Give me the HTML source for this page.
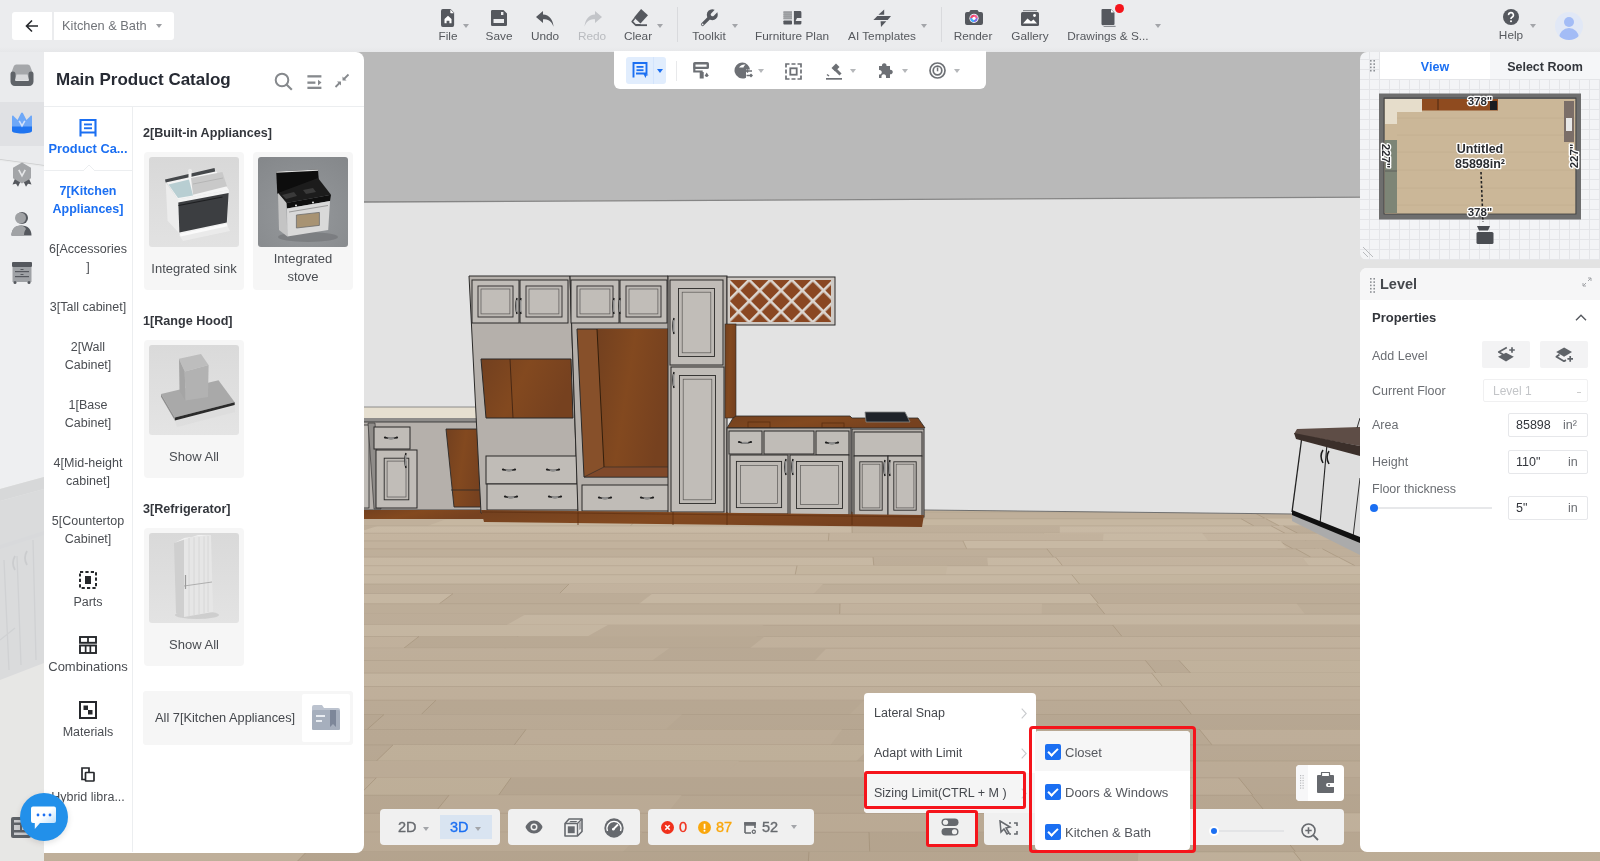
<!DOCTYPE html>
<html><head><meta charset="utf-8">
<style>
*{margin:0;padding:0;box-sizing:border-box}
html,body{width:1600px;height:861px;overflow:hidden;font-family:"Liberation Sans",sans-serif;background:#ebecee;position:relative}
.a{position:absolute}
#scene{position:absolute;left:0;top:52px;width:1600px;height:809px;overflow:hidden}
#topbar{position:absolute;left:0;top:0;width:1600px;height:52px;background:linear-gradient(#ebecee 47px,#e6e7e9 52px)}
.tb{position:absolute;top:0;height:52px;color:#55585d;font-size:11.8px}
.tb svg{position:absolute;top:8px}
.tl{position:absolute;top:29px;white-space:nowrap;transform:translateX(-50%)}
.car{position:absolute;width:0;height:0;border-left:3.5px solid transparent;border-right:3.5px solid transparent;border-top:4px solid #a3a5a9}
#rail{position:absolute;left:0;top:52px;width:44px;height:809px;background:rgba(236,237,239,0.72)}
#cat{position:absolute;left:44px;top:52px;width:320px;height:801px;background:#fff;border-radius:0 8px 8px 0;overflow:hidden}
.cc{position:absolute;left:0;width:88px;text-align:center;font-size:12.5px;line-height:18px;color:#4a4d52;white-space:nowrap}
.sh{position:absolute;left:99px;font-size:12.6px;font-weight:700;color:#33363c;white-space:nowrap}
.card{position:absolute;width:100px;background:#f6f6f6;border-radius:4px}
.card .img{position:absolute;left:5px;top:5px;width:90px;height:90px;border-radius:3px;overflow:hidden}
.card .lbl{position:absolute;left:0;width:100px;text-align:center;font-size:13px;color:#4a4d52;line-height:18px}
.lp{position:absolute;left:12px;font-size:12.5px;color:#6b6e73;white-space:nowrap}
.inp{position:absolute;left:148px;width:80px;height:24px;border:1px solid #e6e7ea;border-radius:2px;background:#fff}
.bx{position:absolute;top:809px;height:36px;background:#f0f0f0;border-radius:4px}
.mi{position:absolute;left:10px;font-size:12.5px;color:#45484d;white-space:nowrap}
.ck{position:absolute;left:10px;width:16px;height:16px;border-radius:2px;background:#1b6ff2}
.ck::after{content:"";position:absolute;left:5px;top:2px;width:4px;height:8px;border:solid #fff;border-width:0 2px 2px 0;transform:rotate(45deg)}
</style></head><body>
<div id="scene"><svg width="1600" height="809" viewBox="0 52 1600 809" style="display:block;position:absolute;left:0;top:0">
<defs>
<pattern id="lat" width="15" height="15" patternUnits="userSpaceOnUse" patternTransform="translate(728,278) rotate(45)"><rect width="15" height="15" fill="#8a4722"/><rect width="15" height="2.6" fill="#dcd6d0"/><rect width="2.6" height="15" fill="#dcd6d0"/></pattern>
</defs>
<defs><linearGradient id="flg" x1="0" y1="0" x2="0" y2="1"><stop offset="0" stop-color="#000" stop-opacity="0"/><stop offset="1" stop-color="#3a2000" stop-opacity="0.07"/></linearGradient></defs>
<rect x="0" y="52" width="1600" height="809" fill="#c3b39e"/>
<rect x="0" y="512.0" width="1600" height="7.1" fill="#bfaf9a"/>
<line x1="0" y1="512.0" x2="1600" y2="512.0" stroke="#ab9b85" stroke-width="0.7" opacity="0.6"/>
<polygon points="1690.0,512.0 1806.4,512.0 1833.3,519.1 1716.9,519.1" fill="#c9baa5"/>
<line x1="1690.0" y1="512.0" x2="1716.9" y2="518.8" stroke="#a8977f" stroke-width="0.8" opacity="0.85"/>
<polygon points="1809.0,512.0 2001.0,512.0 2031.8,519.1 1839.8,519.1" fill="#c9baa5"/>
<line x1="1809.0" y1="512.0" x2="1839.8" y2="518.8" stroke="#a8977f" stroke-width="0.8" opacity="0.85"/>
<polygon points="165.0,512.0 380.4,512.0 358.4,519.1 143.0,519.1" fill="#c6b7a1"/>
<line x1="165.0" y1="512.0" x2="143.0" y2="518.8" stroke="#a8977f" stroke-width="0.8" opacity="0.85"/>
<polygon points="-22.0,512.0 104.0,512.0 76.0,519.1 -50.0,519.1" fill="#bfaf9a"/>
<line x1="-22.0" y1="512.0" x2="-50.0" y2="518.8" stroke="#a8977f" stroke-width="0.8" opacity="0.85"/>
<polygon points="1610.0,512.0 1775.6,512.0 1800.0,519.1 1634.4,519.1" fill="#c0b09b"/>
<line x1="1610.0" y1="512.0" x2="1634.4" y2="518.8" stroke="#a8977f" stroke-width="0.8" opacity="0.85"/>
<polygon points="-430.0,512.0 -309.4,512.0 -350.5,519.1 -471.1,519.1" fill="#c5b5a0"/>
<line x1="-430.0" y1="512.0" x2="-471.1" y2="518.8" stroke="#a8977f" stroke-width="0.8" opacity="0.85"/>
<polygon points="1833.0,512.0 1941.0,512.0 1972.5,519.1 1864.5,519.1" fill="#c6b7a1"/>
<line x1="1833.0" y1="512.0" x2="1864.5" y2="518.8" stroke="#a8977f" stroke-width="0.8" opacity="0.85"/>
<polygon points="1253.0,512.0 1492.4,512.0 1505.3,519.1 1265.9,519.1" fill="#bdad98"/>
<line x1="1253.0" y1="512.0" x2="1265.9" y2="518.8" stroke="#a8977f" stroke-width="0.8" opacity="0.85"/>
<polygon points="1922.0,512.0 2069.6,512.0 2104.0,519.1 1956.4,519.1" fill="#c0b09b"/>
<line x1="1922.0" y1="512.0" x2="1956.4" y2="518.8" stroke="#a8977f" stroke-width="0.8" opacity="0.85"/>
<polygon points="41.0,512.0 287.0,512.0 261.1,519.1 15.1,519.1" fill="#bdad98"/>
<line x1="41.0" y1="512.0" x2="15.1" y2="518.8" stroke="#a8977f" stroke-width="0.8" opacity="0.85"/>
<polygon points="-534.0,512.0 -403.8,512.0 -448.2,519.1 -578.4,519.1" fill="#c0b09b"/>
<line x1="-534.0" y1="512.0" x2="-578.4" y2="518.8" stroke="#a8977f" stroke-width="0.8" opacity="0.85"/>
<polygon points="552.0,512.0 759.6,512.0 750.0,519.1 542.4,519.1" fill="#bdad98"/>
<line x1="552.0" y1="512.0" x2="542.4" y2="518.8" stroke="#a8977f" stroke-width="0.8" opacity="0.85"/>
<rect x="0" y="518.8" width="1600" height="7.4" fill="#c6b7a1"/>
<line x1="0" y1="518.8" x2="1600" y2="518.8" stroke="#ab9b85" stroke-width="0.7" opacity="0.6"/>
<polygon points="1262.9,518.8 1367.5,518.8 1380.9,526.2 1276.2,526.2" fill="#c6b7a1"/>
<line x1="1262.9" y1="518.8" x2="1276.2" y2="525.9" stroke="#a8977f" stroke-width="0.8" opacity="0.85"/>
<polygon points="1723.0,518.8 1896.4,518.8 1924.6,526.2 1751.2,526.2" fill="#c3b39e"/>
<line x1="1723.0" y1="518.8" x2="1751.2" y2="525.9" stroke="#a8977f" stroke-width="0.8" opacity="0.85"/>
<polygon points="1316.7,518.8 1533.4,518.8 1548.5,526.2 1331.7,526.2" fill="#c0b09b"/>
<line x1="1316.7" y1="518.8" x2="1331.7" y2="525.9" stroke="#a8977f" stroke-width="0.8" opacity="0.85"/>
<polygon points="1263.8,518.8 1489.9,518.8 1503.2,526.2 1277.2,526.2" fill="#c9baa5"/>
<line x1="1263.8" y1="518.8" x2="1277.2" y2="525.9" stroke="#a8977f" stroke-width="0.8" opacity="0.85"/>
<polygon points="130.7,518.8 379.1,518.8 355.8,526.2 107.5,526.2" fill="#bfaf9a"/>
<line x1="130.7" y1="518.8" x2="107.5" y2="525.9" stroke="#a8977f" stroke-width="0.8" opacity="0.85"/>
<polygon points="1515.7,518.8 1773.3,518.8 1794.8,526.2 1537.2,526.2" fill="#c9baa5"/>
<line x1="1515.7" y1="518.8" x2="1537.2" y2="525.9" stroke="#a8977f" stroke-width="0.8" opacity="0.85"/>
<polygon points="1368.0,518.8 1482.5,518.8 1499.3,526.2 1384.7,526.2" fill="#c0b09b"/>
<line x1="1368.0" y1="518.8" x2="1384.7" y2="525.9" stroke="#a8977f" stroke-width="0.8" opacity="0.85"/>
<polygon points="2014.2,518.8 2178.9,518.8 2216.6,526.2 2051.8,526.2" fill="#c0b09b"/>
<line x1="2014.2" y1="518.8" x2="2051.8" y2="525.9" stroke="#a8977f" stroke-width="0.8" opacity="0.85"/>
<polygon points="1944.1,518.8 2059.9,518.8 2095.3,526.2 1979.5,526.2" fill="#bdad98"/>
<line x1="1944.1" y1="518.8" x2="1979.5" y2="525.9" stroke="#a8977f" stroke-width="0.8" opacity="0.85"/>
<polygon points="143.9,518.8 303.7,518.8 280.9,526.2 121.1,526.2" fill="#c9baa5"/>
<line x1="143.9" y1="518.8" x2="121.1" y2="525.9" stroke="#a8977f" stroke-width="0.8" opacity="0.85"/>
<polygon points="1241.2,518.8 1339.0,518.8 1351.6,526.2 1253.8,526.2" fill="#c0b09b"/>
<line x1="1241.2" y1="518.8" x2="1253.8" y2="525.9" stroke="#a8977f" stroke-width="0.8" opacity="0.85"/>
<polygon points="637.3,518.8 815.1,518.8 808.2,526.2 630.5,526.2" fill="#c6b7a1"/>
<line x1="637.3" y1="518.8" x2="630.5" y2="525.9" stroke="#a8977f" stroke-width="0.8" opacity="0.85"/>
<polygon points="-43.9,518.8 190.2,518.8 161.3,526.2 -72.8,526.2" fill="#bdad98"/>
<line x1="-43.9" y1="518.8" x2="-72.8" y2="525.9" stroke="#a8977f" stroke-width="0.8" opacity="0.85"/>
<polygon points="-473.0,518.8 -361.6,518.8 -404.3,526.2 -515.8,526.2" fill="#c0b09b"/>
<line x1="-473.0" y1="518.8" x2="-515.8" y2="525.9" stroke="#a8977f" stroke-width="0.8" opacity="0.85"/>
<polygon points="1867.7,518.8 2016.3,518.8 2049.2,526.2 1900.6,526.2" fill="#c6b7a1"/>
<line x1="1867.7" y1="518.8" x2="1900.6" y2="525.9" stroke="#a8977f" stroke-width="0.8" opacity="0.85"/>
<polygon points="1266.0,518.8 1475.3,518.8 1488.7,526.2 1279.4,526.2" fill="#c9baa5"/>
<line x1="1266.0" y1="518.8" x2="1279.4" y2="525.9" stroke="#a8977f" stroke-width="0.8" opacity="0.85"/>
<polygon points="2122.4,518.8 2256.8,518.8 2297.9,526.2 2163.5,526.2" fill="#c3b39e"/>
<line x1="2122.4" y1="518.8" x2="2163.5" y2="525.9" stroke="#a8977f" stroke-width="0.8" opacity="0.85"/>
<polygon points="2101.9,518.8 2309.3,518.8 2349.8,526.2 2142.3,526.2" fill="#c6b7a1"/>
<line x1="2101.9" y1="518.8" x2="2142.3" y2="525.9" stroke="#a8977f" stroke-width="0.8" opacity="0.85"/>
<polygon points="212.0,518.8 447.3,518.8 426.7,526.2 191.4,526.2" fill="#c0b09b"/>
<line x1="212.0" y1="518.8" x2="191.4" y2="525.9" stroke="#a8977f" stroke-width="0.8" opacity="0.85"/>
<rect x="0" y="525.9" width="1600" height="7.7" fill="#c9baa5"/>
<line x1="0" y1="525.9" x2="1600" y2="525.9" stroke="#ab9b85" stroke-width="0.7" opacity="0.6"/>
<polygon points="1271.2,525.9 1475.1,525.9 1488.8,533.5 1284.9,533.5" fill="#c5b5a0"/>
<line x1="1271.2" y1="525.9" x2="1284.9" y2="533.2" stroke="#a8977f" stroke-width="0.8" opacity="0.85"/>
<polygon points="132.0,525.9 377.4,525.9 354.1,533.5 108.6,533.5" fill="#bdad98"/>
<line x1="132.0" y1="525.9" x2="108.6" y2="533.2" stroke="#a8977f" stroke-width="0.8" opacity="0.85"/>
<polygon points="1543.3,525.9 1790.0,525.9 1812.6,533.5 1565.8,533.5" fill="#bdad98"/>
<line x1="1543.3" y1="525.9" x2="1565.8" y2="533.2" stroke="#a8977f" stroke-width="0.8" opacity="0.85"/>
<polygon points="1376.6,525.9 1499.3,525.9 1516.5,533.5 1393.7,533.5" fill="#bfaf9a"/>
<line x1="1376.6" y1="525.9" x2="1393.7" y2="533.2" stroke="#a8977f" stroke-width="0.8" opacity="0.85"/>
<polygon points="1979.6,525.9 2243.6,525.9 2280.4,533.5 2016.4,533.5" fill="#c3b39e"/>
<line x1="1979.6" y1="525.9" x2="2016.4" y2="533.2" stroke="#a8977f" stroke-width="0.8" opacity="0.85"/>
<polygon points="120.0,525.9 316.9,525.9 293.1,533.5 96.2,533.5" fill="#c6b7a1"/>
<line x1="120.0" y1="525.9" x2="96.2" y2="533.2" stroke="#a8977f" stroke-width="0.8" opacity="0.85"/>
<polygon points="-289.7,525.9 -165.7,525.9 -202.8,533.5 -326.8,533.5" fill="#c3b39e"/>
<line x1="-289.7" y1="525.9" x2="-326.8" y2="533.2" stroke="#a8977f" stroke-width="0.8" opacity="0.85"/>
<polygon points="2078.1,525.9 2181.0,525.9 2221.0,533.5 2118.1,533.5" fill="#bdad98"/>
<line x1="2078.1" y1="525.9" x2="2118.1" y2="533.2" stroke="#a8977f" stroke-width="0.8" opacity="0.85"/>
<polygon points="1903.6,525.9 2036.0,525.9 2070.3,533.5 1938.0,533.5" fill="#c0b09b"/>
<line x1="1903.6" y1="525.9" x2="1938.0" y2="533.2" stroke="#a8977f" stroke-width="0.8" opacity="0.85"/>
<polygon points="1283.5,525.9 1537.9,525.9 1552.0,533.5 1297.6,533.5" fill="#bdad98"/>
<line x1="1283.5" y1="525.9" x2="1297.6" y2="533.2" stroke="#a8977f" stroke-width="0.8" opacity="0.85"/>
<polygon points="2145.3,525.9 2244.4,525.9 2286.6,533.5 2187.5,533.5" fill="#c9baa5"/>
<line x1="2145.3" y1="525.9" x2="2187.5" y2="533.2" stroke="#a8977f" stroke-width="0.8" opacity="0.85"/>
<polygon points="-11.7,525.9 182.7,525.9 154.6,533.5 -39.7,533.5" fill="#c9baa5"/>
<line x1="-11.7" y1="525.9" x2="-39.7" y2="533.2" stroke="#a8977f" stroke-width="0.8" opacity="0.85"/>
<polygon points="2029.1,525.9 2190.8,525.9 2229.2,533.5 2067.5,533.5" fill="#c0b09b"/>
<line x1="2029.1" y1="525.9" x2="2067.5" y2="533.2" stroke="#a8977f" stroke-width="0.8" opacity="0.85"/>
<polygon points="-630.9,525.9 -480.0,525.9 -528.2,533.5 -679.1,533.5" fill="#c3b39e"/>
<line x1="-630.9" y1="525.9" x2="-679.1" y2="533.2" stroke="#a8977f" stroke-width="0.8" opacity="0.85"/>
<polygon points="852.0,525.9 1059.8,525.9 1059.8,533.5 852.1,533.5" fill="#bfaf9a"/>
<line x1="852.0" y1="525.9" x2="852.1" y2="533.2" stroke="#a8977f" stroke-width="0.8" opacity="0.85"/>
<rect x="0" y="533.2" width="1600" height="7.9" fill="#c5b5a0"/>
<line x1="0" y1="533.2" x2="1600" y2="533.2" stroke="#ab9b85" stroke-width="0.7" opacity="0.6"/>
<polygon points="1353.8,533.2 1516.8,533.2 1533.3,541.2 1370.3,541.2" fill="#bdad98"/>
<line x1="1353.8" y1="533.2" x2="1370.3" y2="540.9" stroke="#a8977f" stroke-width="0.8" opacity="0.85"/>
<polygon points="1544.1,533.2 1732.9,533.2 1755.6,541.2 1566.8,541.2" fill="#c6b7a1"/>
<line x1="1544.1" y1="533.2" x2="1566.8" y2="540.9" stroke="#a8977f" stroke-width="0.8" opacity="0.85"/>
<polygon points="84.5,533.2 231.0,533.2 205.9,541.2 59.4,541.2" fill="#c0b09b"/>
<line x1="84.5" y1="533.2" x2="59.4" y2="540.9" stroke="#a8977f" stroke-width="0.8" opacity="0.85"/>
<polygon points="1564.7,533.2 1679.5,533.2 1703.0,541.2 1588.1,541.2" fill="#bfaf9a"/>
<line x1="1564.7" y1="533.2" x2="1588.1" y2="540.9" stroke="#a8977f" stroke-width="0.8" opacity="0.85"/>
<polygon points="2089.0,533.2 2227.0,533.2 2267.6,541.2 2129.7,541.2" fill="#c5b5a0"/>
<line x1="2089.0" y1="533.2" x2="2129.7" y2="540.9" stroke="#a8977f" stroke-width="0.8" opacity="0.85"/>
<polygon points="-110.1,533.2 25.2,533.2 -6.3,541.2 -141.6,541.2" fill="#bdad98"/>
<line x1="-110.1" y1="533.2" x2="-141.6" y2="540.9" stroke="#a8977f" stroke-width="0.8" opacity="0.85"/>
<polygon points="-335.0,533.2 -111.9,533.2 -150.8,541.2 -373.9,541.2" fill="#c5b5a0"/>
<line x1="-335.0" y1="533.2" x2="-373.9" y2="540.9" stroke="#a8977f" stroke-width="0.8" opacity="0.85"/>
<polygon points="1679.7,533.2 1845.4,533.2 1872.6,541.2 1706.9,541.2" fill="#c6b7a1"/>
<line x1="1679.7" y1="533.2" x2="1706.9" y2="540.9" stroke="#a8977f" stroke-width="0.8" opacity="0.85"/>
<polygon points="-554.1,533.2 -294.7,533.2 -340.7,541.2 -600.1,541.2" fill="#c0b09b"/>
<line x1="-554.1" y1="533.2" x2="-600.1" y2="540.9" stroke="#a8977f" stroke-width="0.8" opacity="0.85"/>
<polygon points="1043.2,533.2 1202.3,533.2 1208.6,541.2 1049.6,541.2" fill="#c9baa5"/>
<line x1="1043.2" y1="533.2" x2="1049.6" y2="540.9" stroke="#a8977f" stroke-width="0.8" opacity="0.85"/>
<polygon points="2196.0,533.2 2298.3,533.2 2342.4,541.2 2240.1,541.2" fill="#c5b5a0"/>
<line x1="2196.0" y1="533.2" x2="2240.1" y2="540.9" stroke="#a8977f" stroke-width="0.8" opacity="0.85"/>
<polygon points="2032.2,533.2 2290.3,533.2 2329.1,541.2 2071.0,541.2" fill="#bfaf9a"/>
<line x1="2032.2" y1="533.2" x2="2071.0" y2="540.9" stroke="#a8977f" stroke-width="0.8" opacity="0.85"/>
<polygon points="2182.4,533.2 2293.2,533.2 2336.9,541.2 2226.1,541.2" fill="#c3b39e"/>
<line x1="2182.4" y1="533.2" x2="2226.1" y2="540.9" stroke="#a8977f" stroke-width="0.8" opacity="0.85"/>
<polygon points="2066.3,533.2 2241.3,533.2 2281.2,541.2 2106.2,541.2" fill="#c0b09b"/>
<line x1="2066.3" y1="533.2" x2="2106.2" y2="540.9" stroke="#a8977f" stroke-width="0.8" opacity="0.85"/>
<polygon points="-681.1,533.2 -465.2,533.2 -515.4,541.2 -731.3,541.2" fill="#c9baa5"/>
<line x1="-681.1" y1="533.2" x2="-731.3" y2="540.9" stroke="#a8977f" stroke-width="0.8" opacity="0.85"/>
<polygon points="829.0,533.2 1103.6,533.2 1102.9,541.2 828.3,541.2" fill="#c3b39e"/>
<line x1="829.0" y1="533.2" x2="828.3" y2="540.9" stroke="#a8977f" stroke-width="0.8" opacity="0.85"/>
<rect x="0" y="540.9" width="1600" height="8.3" fill="#c3b39e"/>
<line x1="0" y1="540.9" x2="1600" y2="540.9" stroke="#ab9b85" stroke-width="0.7" opacity="0.6"/>
<polygon points="1367.2,540.9 1649.5,540.9 1666.6,549.1 1384.3,549.1" fill="#c0b09b"/>
<line x1="1367.2" y1="540.9" x2="1384.3" y2="548.8" stroke="#a8977f" stroke-width="0.8" opacity="0.85"/>
<polygon points="1305.5,540.9 1588.4,540.9 1603.4,549.1 1320.5,549.1" fill="#c5b5a0"/>
<line x1="1305.5" y1="540.9" x2="1320.5" y2="548.8" stroke="#a8977f" stroke-width="0.8" opacity="0.85"/>
<polygon points="1567.8,540.9 1823.5,540.9 1847.2,549.1 1591.5,549.1" fill="#bfaf9a"/>
<line x1="1567.8" y1="540.9" x2="1591.5" y2="548.8" stroke="#a8977f" stroke-width="0.8" opacity="0.85"/>
<polygon points="1930.1,540.9 2062.3,540.9 2098.0,549.1 1965.7,549.1" fill="#bdad98"/>
<line x1="1930.1" y1="540.9" x2="1965.7" y2="548.8" stroke="#a8977f" stroke-width="0.8" opacity="0.85"/>
<polygon points="89.3,540.9 268.6,540.9 243.5,549.1 64.2,549.1" fill="#bfaf9a"/>
<line x1="89.3" y1="540.9" x2="64.2" y2="548.8" stroke="#a8977f" stroke-width="0.8" opacity="0.85"/>
<polygon points="2132.8,540.9 2418.4,540.9 2460.8,549.1 2175.1,549.1" fill="#bdad98"/>
<line x1="2132.8" y1="540.9" x2="2175.1" y2="548.8" stroke="#a8977f" stroke-width="0.8" opacity="0.85"/>
<polygon points="73.3,540.9 276.4,540.9 250.8,549.1 47.6,549.1" fill="#c3b39e"/>
<line x1="73.3" y1="540.9" x2="47.6" y2="548.8" stroke="#a8977f" stroke-width="0.8" opacity="0.85"/>
<polygon points="1278.6,540.9 1438.1,540.9 1452.3,549.1 1292.8,549.1" fill="#bfaf9a"/>
<line x1="1278.6" y1="540.9" x2="1292.8" y2="548.8" stroke="#a8977f" stroke-width="0.8" opacity="0.85"/>
<polygon points="-608.2,540.9 -326.7,540.9 -374.8,549.1 -656.4,549.1" fill="#c3b39e"/>
<line x1="-608.2" y1="540.9" x2="-656.4" y2="548.8" stroke="#a8977f" stroke-width="0.8" opacity="0.85"/>
<polygon points="1968.6,540.9 2160.1,540.9 2197.1,549.1 2005.5,549.1" fill="#bfaf9a"/>
<line x1="1968.6" y1="540.9" x2="2005.5" y2="548.8" stroke="#a8977f" stroke-width="0.8" opacity="0.85"/>
<polygon points="1045.4,540.9 1280.6,540.9 1287.1,549.1 1051.9,549.1" fill="#c9baa5"/>
<line x1="1045.4" y1="540.9" x2="1051.9" y2="548.8" stroke="#a8977f" stroke-width="0.8" opacity="0.85"/>
<polygon points="2223.1,540.9 2397.6,540.9 2443.0,549.1 2268.4,549.1" fill="#bfaf9a"/>
<line x1="2223.1" y1="540.9" x2="2268.4" y2="548.8" stroke="#a8977f" stroke-width="0.8" opacity="0.85"/>
<polygon points="2105.1,540.9 2256.4,540.9 2297.9,549.1 2146.6,549.1" fill="#c9baa5"/>
<line x1="2105.1" y1="540.9" x2="2146.6" y2="548.8" stroke="#a8977f" stroke-width="0.8" opacity="0.85"/>
<polygon points="-731.2,540.9 -446.2,540.9 -498.5,549.1 -783.4,549.1" fill="#c3b39e"/>
<line x1="-731.2" y1="540.9" x2="-783.4" y2="548.8" stroke="#a8977f" stroke-width="0.8" opacity="0.85"/>
<polygon points="963.0,540.9 1238.4,540.9 1242.1,549.1 966.7,549.1" fill="#c9baa5"/>
<line x1="963.0" y1="540.9" x2="966.7" y2="548.8" stroke="#a8977f" stroke-width="0.8" opacity="0.85"/>
<rect x="0" y="548.8" width="1600" height="8.6" fill="#c0b09b"/>
<line x1="0" y1="548.8" x2="1600" y2="548.8" stroke="#ab9b85" stroke-width="0.7" opacity="0.6"/>
<polygon points="1317.8,548.8 1580.5,548.8 1596.1,557.4 1333.4,557.4" fill="#c0b09b"/>
<line x1="1317.8" y1="548.8" x2="1333.4" y2="557.1" stroke="#a8977f" stroke-width="0.8" opacity="0.85"/>
<polygon points="1314.5,548.8 1555.3,548.8 1570.8,557.4 1329.9,557.4" fill="#c6b7a1"/>
<line x1="1314.5" y1="548.8" x2="1329.9" y2="557.1" stroke="#a8977f" stroke-width="0.8" opacity="0.85"/>
<polygon points="1974.9,548.8 2229.1,548.8 2266.5,557.4 2012.3,557.4" fill="#c5b5a0"/>
<line x1="1974.9" y1="548.8" x2="2012.3" y2="557.1" stroke="#a8977f" stroke-width="0.8" opacity="0.85"/>
<polygon points="56.1,548.8 218.8,548.8 192.4,557.4 29.7,557.4" fill="#bfaf9a"/>
<line x1="56.1" y1="548.8" x2="29.7" y2="557.1" stroke="#a8977f" stroke-width="0.8" opacity="0.85"/>
<polygon points="1611.2,548.8 1790.1,548.8 1815.4,557.4 1636.5,557.4" fill="#c3b39e"/>
<line x1="1611.2" y1="548.8" x2="1636.5" y2="557.1" stroke="#a8977f" stroke-width="0.8" opacity="0.85"/>
<polygon points="40.5,548.8 224.3,548.8 197.4,557.4 13.6,557.4" fill="#bfaf9a"/>
<line x1="40.5" y1="548.8" x2="13.6" y2="557.1" stroke="#a8977f" stroke-width="0.8" opacity="0.85"/>
<polygon points="1295.8,548.8 1478.9,548.8 1493.8,557.4 1310.7,557.4" fill="#c3b39e"/>
<line x1="1295.8" y1="548.8" x2="1310.7" y2="557.1" stroke="#a8977f" stroke-width="0.8" opacity="0.85"/>
<polygon points="2198.4,548.8 2352.7,548.8 2397.5,557.4 2243.3,557.4" fill="#bfaf9a"/>
<line x1="2198.4" y1="548.8" x2="2243.3" y2="557.1" stroke="#a8977f" stroke-width="0.8" opacity="0.85"/>
<polygon points="1046.9,548.8 1277.2,548.8 1283.7,557.4 1053.4,557.4" fill="#c0b09b"/>
<line x1="1046.9" y1="548.8" x2="1053.4" y2="557.1" stroke="#a8977f" stroke-width="0.8" opacity="0.85"/>
<polygon points="1322.4,548.8 1541.4,548.8 1557.1,557.4 1338.1,557.4" fill="#c0b09b"/>
<line x1="1322.4" y1="548.8" x2="1338.1" y2="557.1" stroke="#a8977f" stroke-width="0.8" opacity="0.85"/>
<polygon points="2296.3,548.8 2515.4,548.8 2563.4,557.4 2344.4,557.4" fill="#c3b39e"/>
<line x1="2296.3" y1="548.8" x2="2344.4" y2="557.1" stroke="#a8977f" stroke-width="0.8" opacity="0.85"/>
<polygon points="2107.1,548.8 2290.9,548.8 2332.7,557.4 2148.9,557.4" fill="#c0b09b"/>
<line x1="2107.1" y1="548.8" x2="2148.9" y2="557.1" stroke="#a8977f" stroke-width="0.8" opacity="0.85"/>
<polygon points="2274.6,548.8 2449.9,548.8 2497.3,557.4 2321.9,557.4" fill="#bfaf9a"/>
<line x1="2274.6" y1="548.8" x2="2321.9" y2="557.1" stroke="#a8977f" stroke-width="0.8" opacity="0.85"/>
<polygon points="-90.9,548.8 62.7,548.8 31.4,557.4 -122.1,557.4" fill="#c6b7a1"/>
<line x1="-90.9" y1="548.8" x2="-122.1" y2="557.1" stroke="#a8977f" stroke-width="0.8" opacity="0.85"/>
<polygon points="2146.5,548.8 2299.3,548.8 2342.4,557.4 2189.6,557.4" fill="#c0b09b"/>
<line x1="2146.5" y1="548.8" x2="2189.6" y2="557.1" stroke="#a8977f" stroke-width="0.8" opacity="0.85"/>
<polygon points="1469.0,548.8 1606.3,548.8 1626.9,557.4 1489.6,557.4" fill="#c5b5a0"/>
<line x1="1469.0" y1="548.8" x2="1489.6" y2="557.1" stroke="#a8977f" stroke-width="0.8" opacity="0.85"/>
<rect x="0" y="557.1" width="1600" height="8.9" fill="#c9baa5"/>
<line x1="0" y1="557.1" x2="1600" y2="557.1" stroke="#ab9b85" stroke-width="0.7" opacity="0.6"/>
<polygon points="1338.5,557.1 1579.4,557.1 1595.7,566.0 1354.9,566.0" fill="#c3b39e"/>
<line x1="1338.5" y1="557.1" x2="1354.9" y2="565.7" stroke="#a8977f" stroke-width="0.8" opacity="0.85"/>
<polygon points="1615.0,557.1 1802.0,557.1 1827.6,566.0 1640.6,566.0" fill="#bdad98"/>
<line x1="1615.0" y1="557.1" x2="1640.6" y2="565.7" stroke="#a8977f" stroke-width="0.8" opacity="0.85"/>
<polygon points="12.3,557.1 260.5,557.1 232.4,566.0 -15.7,566.0" fill="#c3b39e"/>
<line x1="12.3" y1="557.1" x2="-15.7" y2="565.7" stroke="#a8977f" stroke-width="0.8" opacity="0.85"/>
<polygon points="2143.4,557.1 2267.1,557.1 2310.4,566.0 2186.7,566.0" fill="#c6b7a1"/>
<line x1="2143.4" y1="557.1" x2="2186.7" y2="565.7" stroke="#a8977f" stroke-width="0.8" opacity="0.85"/>
<polygon points="-436.6,557.1 -253.2,557.1 -296.3,566.0 -479.6,566.0" fill="#bfaf9a"/>
<line x1="-436.6" y1="557.1" x2="-479.6" y2="565.7" stroke="#a8977f" stroke-width="0.8" opacity="0.85"/>
<polygon points="-455.6,557.1 -195.1,557.1 -238.8,566.0 -499.3,566.0" fill="#c0b09b"/>
<line x1="-455.6" y1="557.1" x2="-499.3" y2="565.7" stroke="#a8977f" stroke-width="0.8" opacity="0.85"/>
<polygon points="2044.2,557.1 2287.2,557.1 2327.2,566.0 2084.2,566.0" fill="#bdad98"/>
<line x1="2044.2" y1="557.1" x2="2084.2" y2="565.7" stroke="#a8977f" stroke-width="0.8" opacity="0.85"/>
<polygon points="1055.6,557.1 1302.3,557.1 1309.1,566.0 1062.5,566.0" fill="#c5b5a0"/>
<line x1="1055.6" y1="557.1" x2="1062.5" y2="565.7" stroke="#a8977f" stroke-width="0.8" opacity="0.85"/>
<polygon points="2143.9,557.1 2325.0,557.1 2368.3,566.0 2187.2,566.0" fill="#bdad98"/>
<line x1="2143.9" y1="557.1" x2="2187.2" y2="565.7" stroke="#a8977f" stroke-width="0.8" opacity="0.85"/>
<polygon points="2324.9,557.1 2495.1,557.1 2544.5,566.0 2374.2,566.0" fill="#c3b39e"/>
<line x1="2324.9" y1="557.1" x2="2374.2" y2="565.7" stroke="#a8977f" stroke-width="0.8" opacity="0.85"/>
<polygon points="-832.5,557.1 -532.7,557.1 -589.0,566.0 -888.8,566.0" fill="#c6b7a1"/>
<line x1="-832.5" y1="557.1" x2="-888.8" y2="565.7" stroke="#a8977f" stroke-width="0.8" opacity="0.85"/>
<polygon points="873.0,557.1 987.2,557.1 988.0,566.0 873.8,566.0" fill="#bfaf9a"/>
<line x1="873.0" y1="557.1" x2="873.8" y2="565.7" stroke="#a8977f" stroke-width="0.8" opacity="0.85"/>
<rect x="0" y="565.7" width="1600" height="9.2" fill="#c9baa5"/>
<line x1="0" y1="565.7" x2="1600" y2="565.7" stroke="#ab9b85" stroke-width="0.7" opacity="0.6"/>
<polygon points="2050.9,565.7 2354.8,565.7 2395.2,575.0 2091.4,575.0" fill="#c3b39e"/>
<line x1="2050.9" y1="565.7" x2="2091.4" y2="574.7" stroke="#a8977f" stroke-width="0.8" opacity="0.85"/>
<polygon points="10.5,565.7 205.3,565.7 177.0,575.0 -17.8,575.0" fill="#c5b5a0"/>
<line x1="10.5" y1="565.7" x2="-17.8" y2="574.7" stroke="#a8977f" stroke-width="0.8" opacity="0.85"/>
<polygon points="1470.2,565.7 1628.8,565.7 1649.7,575.0 1491.0,575.0" fill="#c5b5a0"/>
<line x1="1470.2" y1="565.7" x2="1491.0" y2="574.7" stroke="#a8977f" stroke-width="0.8" opacity="0.85"/>
<polygon points="-484.8,565.7 -220.1,565.7 -265.1,575.0 -529.8,575.0" fill="#bfaf9a"/>
<line x1="-484.8" y1="565.7" x2="-529.8" y2="574.7" stroke="#a8977f" stroke-width="0.8" opacity="0.85"/>
<polygon points="1794.5,565.7 1915.6,565.7 1947.4,575.0 1826.3,575.0" fill="#c3b39e"/>
<line x1="1794.5" y1="565.7" x2="1826.3" y2="574.7" stroke="#a8977f" stroke-width="0.8" opacity="0.85"/>
<polygon points="2288.8,565.7 2443.0,565.7 2491.5,575.0 2337.3,575.0" fill="#c6b7a1"/>
<line x1="2288.8" y1="565.7" x2="2337.3" y2="574.7" stroke="#a8977f" stroke-width="0.8" opacity="0.85"/>
<polygon points="-757.0,565.7 -553.2,565.7 -607.4,575.0 -811.1,575.0" fill="#c5b5a0"/>
<line x1="-757.0" y1="565.7" x2="-811.1" y2="574.7" stroke="#a8977f" stroke-width="0.8" opacity="0.85"/>
<polygon points="2088.3,565.7 2371.8,565.7 2413.5,575.0 2130.0,575.0" fill="#c9baa5"/>
<line x1="2088.3" y1="565.7" x2="2130.0" y2="574.7" stroke="#a8977f" stroke-width="0.8" opacity="0.85"/>
<polygon points="2388.1,565.7 2694.9,565.7 2746.7,575.0 2439.9,575.0" fill="#bdad98"/>
<line x1="2388.1" y1="565.7" x2="2439.9" y2="574.7" stroke="#a8977f" stroke-width="0.8" opacity="0.85"/>
<polygon points="-153.9,565.7 34.1,565.7 0.3,575.0 -187.7,575.0" fill="#c6b7a1"/>
<line x1="-153.9" y1="565.7" x2="-187.7" y2="574.7" stroke="#a8977f" stroke-width="0.8" opacity="0.85"/>
<polygon points="2228.2,565.7 2485.4,565.7 2531.8,575.0 2274.6,575.0" fill="#c5b5a0"/>
<line x1="2228.2" y1="565.7" x2="2274.6" y2="574.7" stroke="#a8977f" stroke-width="0.8" opacity="0.85"/>
<polygon points="797.0,565.7 947.4,565.7 945.6,575.0 795.2,575.0" fill="#c6b7a1"/>
<line x1="797.0" y1="565.7" x2="795.2" y2="574.7" stroke="#a8977f" stroke-width="0.8" opacity="0.85"/>
<rect x="0" y="574.7" width="1600" height="9.6" fill="#c9baa5"/>
<line x1="0" y1="574.7" x2="1600" y2="574.7" stroke="#ab9b85" stroke-width="0.7" opacity="0.6"/>
<polygon points="1370.8,574.7 1506.8,574.7 1524.5,584.3 1388.5,584.3" fill="#bdad98"/>
<line x1="1370.8" y1="574.7" x2="1388.5" y2="584.0" stroke="#a8977f" stroke-width="0.8" opacity="0.85"/>
<polygon points="1690.9,574.7 1934.2,574.7 1962.7,584.3 1719.4,584.3" fill="#c3b39e"/>
<line x1="1690.9" y1="574.7" x2="1719.4" y2="584.0" stroke="#a8977f" stroke-width="0.8" opacity="0.85"/>
<polygon points="2225.5,574.7 2430.7,574.7 2477.3,584.3 2272.1,584.3" fill="#c6b7a1"/>
<line x1="2225.5" y1="574.7" x2="2272.1" y2="584.0" stroke="#a8977f" stroke-width="0.8" opacity="0.85"/>
<polygon points="-44.3,574.7 261.9,574.7 231.6,584.3 -74.6,584.3" fill="#bdad98"/>
<line x1="-44.3" y1="574.7" x2="-74.6" y2="584.0" stroke="#a8977f" stroke-width="0.8" opacity="0.85"/>
<polygon points="1830.4,574.7 2043.4,574.7 2076.6,584.3 1863.7,584.3" fill="#c9baa5"/>
<line x1="1830.4" y1="574.7" x2="1863.7" y2="584.0" stroke="#a8977f" stroke-width="0.8" opacity="0.85"/>
<polygon points="-808.0,574.7 -483.9,574.7 -540.0,584.3 -864.2,584.3" fill="#c6b7a1"/>
<line x1="-808.0" y1="574.7" x2="-864.2" y2="584.0" stroke="#a8977f" stroke-width="0.8" opacity="0.85"/>
<polygon points="1071.8,574.7 1374.2,574.7 1381.7,584.3 1079.4,584.3" fill="#c6b7a1"/>
<line x1="1071.8" y1="574.7" x2="1079.4" y2="584.0" stroke="#a8977f" stroke-width="0.8" opacity="0.85"/>
<polygon points="2235.5,574.7 2449.3,574.7 2496.2,584.3 2282.5,584.3" fill="#c0b09b"/>
<line x1="2235.5" y1="574.7" x2="2282.5" y2="584.0" stroke="#a8977f" stroke-width="0.8" opacity="0.85"/>
<polygon points="2282.7,574.7 2444.4,574.7 2492.9,584.3 2331.2,584.3" fill="#c3b39e"/>
<line x1="2282.7" y1="574.7" x2="2331.2" y2="584.0" stroke="#a8977f" stroke-width="0.8" opacity="0.85"/>
<polygon points="-949.5,574.7 -667.3,574.7 -728.3,584.3 -1010.5,584.3" fill="#c6b7a1"/>
<line x1="-949.5" y1="574.7" x2="-1010.5" y2="584.0" stroke="#a8977f" stroke-width="0.8" opacity="0.85"/>
<polygon points="1532.0,574.7 1695.2,574.7 1718.3,584.3 1555.1,584.3" fill="#bdad98"/>
<line x1="1532.0" y1="574.7" x2="1555.1" y2="584.0" stroke="#a8977f" stroke-width="0.8" opacity="0.85"/>
<rect x="0" y="584.0" width="1600" height="10.0" fill="#c0b09b"/>
<line x1="0" y1="584.0" x2="1600" y2="584.0" stroke="#ab9b85" stroke-width="0.7" opacity="0.6"/>
<polygon points="1974.8,584.0 2130.7,584.0 2169.1,593.9 2013.2,593.9" fill="#c6b7a1"/>
<line x1="1974.8" y1="584.0" x2="2013.2" y2="593.6" stroke="#a8977f" stroke-width="0.8" opacity="0.85"/>
<polygon points="1464.1,584.0 1650.6,584.0 1671.5,593.9 1485.1,593.9" fill="#c5b5a0"/>
<line x1="1464.1" y1="584.0" x2="1485.1" y2="593.6" stroke="#a8977f" stroke-width="0.8" opacity="0.85"/>
<polygon points="1386.8,584.0 1603.8,584.0 1622.1,593.9 1405.1,593.9" fill="#c3b39e"/>
<line x1="1386.8" y1="584.0" x2="1405.1" y2="593.6" stroke="#a8977f" stroke-width="0.8" opacity="0.85"/>
<polygon points="2133.2,584.0 2407.2,584.0 2451.0,593.9 2176.9,593.9" fill="#c5b5a0"/>
<line x1="2133.2" y1="584.0" x2="2176.9" y2="593.6" stroke="#a8977f" stroke-width="0.8" opacity="0.85"/>
<polygon points="-76.6,584.0 240.9,584.0 209.3,593.9 -108.2,593.9" fill="#bdad98"/>
<line x1="-76.6" y1="584.0" x2="-108.2" y2="593.6" stroke="#a8977f" stroke-width="0.8" opacity="0.85"/>
<polygon points="1516.0,584.0 1722.6,584.0 1745.3,593.9 1538.7,593.9" fill="#c9baa5"/>
<line x1="1516.0" y1="584.0" x2="1538.7" y2="593.6" stroke="#a8977f" stroke-width="0.8" opacity="0.85"/>
<polygon points="2271.2,584.0 2532.4,584.0 2580.8,593.9 2319.6,593.9" fill="#c9baa5"/>
<line x1="2271.2" y1="584.0" x2="2319.6" y2="593.6" stroke="#a8977f" stroke-width="0.8" opacity="0.85"/>
<polygon points="-573.5,584.0 -398.3,584.0 -446.8,593.9 -622.0,593.9" fill="#bdad98"/>
<line x1="-573.5" y1="584.0" x2="-622.0" y2="593.6" stroke="#a8977f" stroke-width="0.8" opacity="0.85"/>
<polygon points="570.4,584.0 721.5,584.0 712.0,593.9 560.9,593.9" fill="#bfaf9a"/>
<line x1="570.4" y1="584.0" x2="560.9" y2="593.6" stroke="#a8977f" stroke-width="0.8" opacity="0.85"/>
<polygon points="2386.7,584.0 2556.3,584.0 2608.6,593.9 2439.1,593.9" fill="#bfaf9a"/>
<line x1="2386.7" y1="584.0" x2="2439.1" y2="593.6" stroke="#a8977f" stroke-width="0.8" opacity="0.85"/>
<polygon points="2171.4,584.0 2379.5,584.0 2424.6,593.9 2216.4,593.9" fill="#bdad98"/>
<line x1="2171.4" y1="584.0" x2="2216.4" y2="593.6" stroke="#a8977f" stroke-width="0.8" opacity="0.85"/>
<polygon points="2499.8,584.0 2794.8,584.0 2851.0,593.9 2556.1,593.9" fill="#bdad98"/>
<line x1="2499.8" y1="584.0" x2="2556.1" y2="593.6" stroke="#a8977f" stroke-width="0.8" opacity="0.85"/>
<polygon points="2279.5,584.0 2506.2,584.0 2554.9,593.9 2328.3,593.9" fill="#c5b5a0"/>
<line x1="2279.5" y1="584.0" x2="2328.3" y2="593.6" stroke="#a8977f" stroke-width="0.8" opacity="0.85"/>
<polygon points="2472.4,584.0 2654.8,584.0 2710.1,593.9 2527.7,593.9" fill="#bdad98"/>
<line x1="2472.4" y1="584.0" x2="2527.7" y2="593.6" stroke="#a8977f" stroke-width="0.8" opacity="0.85"/>
<polygon points="-1007.5,584.0 -824.3,584.0 -887.6,593.9 -1070.8,593.9" fill="#c9baa5"/>
<line x1="-1007.5" y1="584.0" x2="-1070.8" y2="593.6" stroke="#a8977f" stroke-width="0.8" opacity="0.85"/>
<polygon points="569.0,584.0 823.0,584.0 813.4,593.9 559.4,593.9" fill="#c5b5a0"/>
<line x1="569.0" y1="584.0" x2="559.4" y2="593.6" stroke="#a8977f" stroke-width="0.8" opacity="0.85"/>
<rect x="0" y="593.6" width="1600" height="10.4" fill="#c9baa5"/>
<line x1="0" y1="593.6" x2="1600" y2="593.6" stroke="#ab9b85" stroke-width="0.7" opacity="0.6"/>
<polygon points="1718.6,593.6 2062.7,593.6 2092.4,604.0 1748.4,604.0" fill="#bdad98"/>
<line x1="1718.6" y1="593.6" x2="1748.4" y2="603.7" stroke="#a8977f" stroke-width="0.8" opacity="0.85"/>
<polygon points="-79.2,593.6 81.2,593.6 49.4,604.0 -111.0,604.0" fill="#c0b09b"/>
<line x1="-79.2" y1="593.6" x2="-111.0" y2="603.7" stroke="#a8977f" stroke-width="0.8" opacity="0.85"/>
<polygon points="-107.3,593.6 172.8,593.6 140.0,604.0 -140.1,604.0" fill="#c9baa5"/>
<line x1="-107.3" y1="593.6" x2="-140.1" y2="603.7" stroke="#a8977f" stroke-width="0.8" opacity="0.85"/>
<polygon points="-103.9,593.6 175.3,593.6 142.6,604.0 -136.7,604.0" fill="#c6b7a1"/>
<line x1="-103.9" y1="593.6" x2="-136.7" y2="603.7" stroke="#a8977f" stroke-width="0.8" opacity="0.85"/>
<polygon points="-620.1,593.6 -327.6,593.6 -378.0,604.0 -670.5,604.0" fill="#c5b5a0"/>
<line x1="-620.1" y1="593.6" x2="-670.5" y2="603.7" stroke="#a8977f" stroke-width="0.8" opacity="0.85"/>
<polygon points="1894.1,593.6 2183.3,593.6 2219.1,604.0 1929.9,604.0" fill="#c3b39e"/>
<line x1="1894.1" y1="593.6" x2="1929.9" y2="603.7" stroke="#a8977f" stroke-width="0.8" opacity="0.85"/>
<polygon points="2445.1,593.6 2652.0,593.6 2706.7,604.0 2499.8,604.0" fill="#bfaf9a"/>
<line x1="2445.1" y1="593.6" x2="2499.8" y2="603.7" stroke="#a8977f" stroke-width="0.8" opacity="0.85"/>
<polygon points="2214.5,593.6 2495.4,593.6 2542.2,604.0 2261.3,604.0" fill="#c5b5a0"/>
<line x1="2214.5" y1="593.6" x2="2261.3" y2="603.7" stroke="#a8977f" stroke-width="0.8" opacity="0.85"/>
<polygon points="1090.2,593.6 1380.3,593.6 1388.5,604.0 1098.5,604.0" fill="#bfaf9a"/>
<line x1="1090.2" y1="593.6" x2="1098.5" y2="603.7" stroke="#a8977f" stroke-width="0.8" opacity="0.85"/>
<polygon points="-1073.9,593.6 -883.6,593.6 -949.5,604.0 -1139.9,604.0" fill="#c3b39e"/>
<line x1="-1073.9" y1="593.6" x2="-1139.9" y2="603.7" stroke="#a8977f" stroke-width="0.8" opacity="0.85"/>
<polygon points="453.0,593.6 652.5,593.6 638.8,604.0 439.4,604.0" fill="#bfaf9a"/>
<line x1="453.0" y1="593.6" x2="439.4" y2="603.7" stroke="#a8977f" stroke-width="0.8" opacity="0.85"/>
<rect x="0" y="603.7" width="1600" height="10.8" fill="#c0b09b"/>
<line x1="0" y1="603.7" x2="1600" y2="603.7" stroke="#ab9b85" stroke-width="0.7" opacity="0.6"/>
<polygon points="1427.9,603.7 1709.8,603.7 1729.7,614.5 1447.8,614.5" fill="#bfaf9a"/>
<line x1="1427.9" y1="603.7" x2="1447.8" y2="614.2" stroke="#a8977f" stroke-width="0.8" opacity="0.85"/>
<polygon points="1499.7,603.7 1629.5,603.7 1651.9,614.5 1522.1,614.5" fill="#bfaf9a"/>
<line x1="1499.7" y1="603.7" x2="1522.1" y2="614.2" stroke="#a8977f" stroke-width="0.8" opacity="0.85"/>
<polygon points="1418.0,603.7 1712.9,603.7 1732.4,614.5 1437.6,614.5" fill="#bfaf9a"/>
<line x1="1418.0" y1="603.7" x2="1437.6" y2="614.2" stroke="#a8977f" stroke-width="0.8" opacity="0.85"/>
<polygon points="1566.4,603.7 1734.0,603.7 1758.7,614.5 1591.1,614.5" fill="#bfaf9a"/>
<line x1="1566.4" y1="603.7" x2="1591.1" y2="614.2" stroke="#a8977f" stroke-width="0.8" opacity="0.85"/>
<polygon points="2470.4,603.7 2609.6,603.7 2665.5,614.5 2526.2,614.5" fill="#bdad98"/>
<line x1="2470.4" y1="603.7" x2="2526.2" y2="614.2" stroke="#a8977f" stroke-width="0.8" opacity="0.85"/>
<polygon points="2370.3,603.7 2658.2,603.7 2710.6,614.5 2422.7,614.5" fill="#c3b39e"/>
<line x1="2370.3" y1="603.7" x2="2422.7" y2="614.2" stroke="#a8977f" stroke-width="0.8" opacity="0.85"/>
<polygon points="-139.6,603.7 -6.4,603.7 -40.5,614.5 -173.7,614.5" fill="#c5b5a0"/>
<line x1="-139.6" y1="603.7" x2="-173.7" y2="614.2" stroke="#a8977f" stroke-width="0.8" opacity="0.85"/>
<polygon points="1397.9,603.7 1575.0,603.7 1593.9,614.5 1416.8,614.5" fill="#bfaf9a"/>
<line x1="1397.9" y1="603.7" x2="1416.8" y2="614.2" stroke="#a8977f" stroke-width="0.8" opacity="0.85"/>
<polygon points="-391.3,603.7 -77.6,603.7 -120.4,614.5 -434.1,614.5" fill="#bdad98"/>
<line x1="-391.3" y1="603.7" x2="-434.1" y2="614.2" stroke="#a8977f" stroke-width="0.8" opacity="0.85"/>
<polygon points="2267.4,603.7 2503.8,603.7 2552.6,614.5 2316.2,614.5" fill="#c0b09b"/>
<line x1="2267.4" y1="603.7" x2="2316.2" y2="614.2" stroke="#a8977f" stroke-width="0.8" opacity="0.85"/>
<polygon points="1096.4,603.7 1296.7,603.7 1305.2,614.5 1104.9,614.5" fill="#c5b5a0"/>
<line x1="1096.4" y1="603.7" x2="1104.9" y2="614.2" stroke="#a8977f" stroke-width="0.8" opacity="0.85"/>
<polygon points="2606.2,603.7 2900.2,603.7 2960.7,614.5 2666.7,614.5" fill="#c5b5a0"/>
<line x1="2606.2" y1="603.7" x2="2666.7" y2="614.2" stroke="#a8977f" stroke-width="0.8" opacity="0.85"/>
<polygon points="840.0,603.7 1042.0,603.7 1041.6,614.5 839.7,614.5" fill="#c5b5a0"/>
<line x1="840.0" y1="603.7" x2="839.7" y2="614.2" stroke="#a8977f" stroke-width="0.8" opacity="0.85"/>
<rect x="0" y="614.2" width="1600" height="11.2" fill="#c9baa5"/>
<line x1="0" y1="614.2" x2="1600" y2="614.2" stroke="#ab9b85" stroke-width="0.7" opacity="0.6"/>
<polygon points="1446.7,614.2 1755.3,614.2 1776.0,625.4 1467.4,625.4" fill="#bfaf9a"/>
<line x1="1446.7" y1="614.2" x2="1467.4" y2="625.1" stroke="#a8977f" stroke-width="0.8" opacity="0.85"/>
<polygon points="1522.3,614.2 1890.4,614.2 1913.7,625.4 1545.6,625.4" fill="#c3b39e"/>
<line x1="1522.3" y1="614.2" x2="1545.6" y2="625.1" stroke="#a8977f" stroke-width="0.8" opacity="0.85"/>
<polygon points="2262.3,614.2 2520.1,614.2 2569.1,625.4 2311.2,625.4" fill="#bfaf9a"/>
<line x1="2262.3" y1="614.2" x2="2311.2" y2="625.1" stroke="#a8977f" stroke-width="0.8" opacity="0.85"/>
<polygon points="-183.5,614.2 -24.3,614.2 -60.1,625.4 -219.3,625.4" fill="#bfaf9a"/>
<line x1="-183.5" y1="614.2" x2="-219.3" y2="625.1" stroke="#a8977f" stroke-width="0.8" opacity="0.85"/>
<polygon points="1590.0,614.2 1831.0,614.2 1856.6,625.4 1615.7,625.4" fill="#c5b5a0"/>
<line x1="1590.0" y1="614.2" x2="1615.7" y2="625.1" stroke="#a8977f" stroke-width="0.8" opacity="0.85"/>
<polygon points="2422.8,614.2 2770.5,614.2 2825.0,625.4 2477.3,625.4" fill="#c6b7a1"/>
<line x1="2422.8" y1="614.2" x2="2477.3" y2="625.1" stroke="#a8977f" stroke-width="0.8" opacity="0.85"/>
<polygon points="-169.6,614.2 168.3,614.2 133.0,625.4 -204.9,625.4" fill="#c9baa5"/>
<line x1="-169.6" y1="614.2" x2="-204.9" y2="625.1" stroke="#a8977f" stroke-width="0.8" opacity="0.85"/>
<polygon points="-730.3,614.2 -484.9,614.2 -539.6,625.4 -785.0,625.4" fill="#bfaf9a"/>
<line x1="-730.3" y1="614.2" x2="-785.0" y2="625.1" stroke="#a8977f" stroke-width="0.8" opacity="0.85"/>
<polygon points="2550.3,614.2 2874.8,614.2 2933.8,625.4 2609.2,625.4" fill="#c5b5a0"/>
<line x1="2550.3" y1="614.2" x2="2609.2" y2="625.1" stroke="#a8977f" stroke-width="0.8" opacity="0.85"/>
<polygon points="2437.2,614.2 2641.7,614.2 2696.7,625.4 2492.2,625.4" fill="#c3b39e"/>
<line x1="2437.2" y1="614.2" x2="2492.2" y2="625.1" stroke="#a8977f" stroke-width="0.8" opacity="0.85"/>
<polygon points="2481.1,614.2 2685.6,614.2 2742.2,625.4 2537.6,625.4" fill="#bdad98"/>
<line x1="2481.1" y1="614.2" x2="2537.6" y2="625.1" stroke="#a8977f" stroke-width="0.8" opacity="0.85"/>
<polygon points="-1210.4,614.2 -931.2,614.2 -1002.6,625.4 -1281.8,625.4" fill="#bfaf9a"/>
<line x1="-1210.4" y1="614.2" x2="-1281.8" y2="625.1" stroke="#a8977f" stroke-width="0.8" opacity="0.85"/>
<polygon points="275.0,614.2 525.7,614.2 505.8,625.4 255.1,625.4" fill="#c0b09b"/>
<line x1="275.0" y1="614.2" x2="255.1" y2="625.1" stroke="#a8977f" stroke-width="0.8" opacity="0.85"/>
<rect x="0" y="625.1" width="1600" height="11.6" fill="#bfaf9a"/>
<line x1="0" y1="625.1" x2="1600" y2="625.1" stroke="#ab9b85" stroke-width="0.7" opacity="0.6"/>
<polygon points="2145.1,625.1 2491.9,625.1 2537.0,636.7 2190.2,636.7" fill="#c5b5a0"/>
<line x1="2145.1" y1="625.1" x2="2190.2" y2="636.4" stroke="#a8977f" stroke-width="0.8" opacity="0.85"/>
<polygon points="1553.7,625.1 1869.3,625.1 1893.8,636.7 1578.2,636.7" fill="#c6b7a1"/>
<line x1="1553.7" y1="625.1" x2="1578.2" y2="636.4" stroke="#a8977f" stroke-width="0.8" opacity="0.85"/>
<polygon points="1467.3,625.1 1828.9,625.1 1850.4,636.7 1488.8,636.7" fill="#c5b5a0"/>
<line x1="1467.3" y1="625.1" x2="1488.8" y2="636.4" stroke="#a8977f" stroke-width="0.8" opacity="0.85"/>
<polygon points="2311.3,625.1 2587.3,625.1 2638.2,636.7 2362.2,636.7" fill="#c0b09b"/>
<line x1="2311.3" y1="625.1" x2="2362.2" y2="636.4" stroke="#a8977f" stroke-width="0.8" opacity="0.85"/>
<polygon points="-215.1,625.1 -23.8,625.1 -60.9,636.7 -252.2,636.7" fill="#c3b39e"/>
<line x1="-215.1" y1="625.1" x2="-252.2" y2="636.4" stroke="#a8977f" stroke-width="0.8" opacity="0.85"/>
<polygon points="-200.9,625.1 -58.3,625.1 -94.9,636.7 -237.5,636.7" fill="#bdad98"/>
<line x1="-200.9" y1="625.1" x2="-237.5" y2="636.4" stroke="#a8977f" stroke-width="0.8" opacity="0.85"/>
<polygon points="529.1,625.1 763.7,625.1 752.5,636.7 517.9,636.7" fill="#bfaf9a"/>
<line x1="529.1" y1="625.1" x2="517.9" y2="636.4" stroke="#a8977f" stroke-width="0.8" opacity="0.85"/>
<polygon points="-479.0,625.1 -270.1,625.1 -316.4,636.7 -525.3,636.7" fill="#c3b39e"/>
<line x1="-479.0" y1="625.1" x2="-525.3" y2="636.4" stroke="#a8977f" stroke-width="0.8" opacity="0.85"/>
<polygon points="-802.4,625.1 -487.8,625.1 -545.4,636.7 -860.0,636.7" fill="#c9baa5"/>
<line x1="-802.4" y1="625.1" x2="-860.0" y2="636.4" stroke="#a8977f" stroke-width="0.8" opacity="0.85"/>
<polygon points="2012.2,625.1 2290.0,625.1 2330.5,636.7 2052.7,636.7" fill="#c3b39e"/>
<line x1="2012.2" y1="625.1" x2="2052.7" y2="636.4" stroke="#a8977f" stroke-width="0.8" opacity="0.85"/>
<polygon points="2612.2,625.1 2934.2,625.1 2995.6,636.7 2673.6,636.7" fill="#c9baa5"/>
<line x1="2612.2" y1="625.1" x2="2673.6" y2="636.4" stroke="#a8977f" stroke-width="0.8" opacity="0.85"/>
<polygon points="-1112.1,625.1 -933.6,625.1 -1002.0,636.7 -1180.5,636.7" fill="#c3b39e"/>
<line x1="-1112.1" y1="625.1" x2="-1180.5" y2="636.4" stroke="#a8977f" stroke-width="0.8" opacity="0.85"/>
<polygon points="2365.9,625.1 2592.2,625.1 2645.0,636.7 2418.7,636.7" fill="#c9baa5"/>
<line x1="2365.9" y1="625.1" x2="2418.7" y2="636.4" stroke="#a8977f" stroke-width="0.8" opacity="0.85"/>
<polygon points="1112.7,625.1 1427.4,625.1 1436.5,636.7 1121.9,636.7" fill="#c0b09b"/>
<line x1="1112.7" y1="625.1" x2="1121.9" y2="636.4" stroke="#a8977f" stroke-width="0.8" opacity="0.85"/>
<polygon points="2488.2,625.1 2677.7,625.1 2734.8,636.7 2545.2,636.7" fill="#c5b5a0"/>
<line x1="2488.2" y1="625.1" x2="2545.2" y2="636.4" stroke="#a8977f" stroke-width="0.8" opacity="0.85"/>
<polygon points="-383.3,625.1 -100.0,625.1 -142.9,636.7 -426.3,636.7" fill="#c9baa5"/>
<line x1="-383.3" y1="625.1" x2="-426.3" y2="636.4" stroke="#a8977f" stroke-width="0.8" opacity="0.85"/>
<polygon points="249.0,625.1 607.8,625.1 586.9,636.7 228.1,636.7" fill="#c9baa5"/>
<line x1="249.0" y1="625.1" x2="228.1" y2="636.4" stroke="#a8977f" stroke-width="0.8" opacity="0.85"/>
<rect x="0" y="636.4" width="1600" height="12.1" fill="#c5b5a0"/>
<line x1="0" y1="636.4" x2="1600" y2="636.4" stroke="#ab9b85" stroke-width="0.7" opacity="0.6"/>
<polygon points="1571.1,636.4 1875.8,636.4 1901.0,648.5 1596.4,648.5" fill="#c3b39e"/>
<line x1="1571.1" y1="636.4" x2="1596.4" y2="648.2" stroke="#a8977f" stroke-width="0.8" opacity="0.85"/>
<polygon points="1480.7,636.4 1766.3,636.4 1788.4,648.5 1502.8,648.5" fill="#bfaf9a"/>
<line x1="1480.7" y1="636.4" x2="1502.8" y2="648.2" stroke="#a8977f" stroke-width="0.8" opacity="0.85"/>
<polygon points="1854.6,636.4 2046.9,636.4 2082.1,648.5 1889.8,648.5" fill="#bfaf9a"/>
<line x1="1854.6" y1="636.4" x2="1889.8" y2="648.2" stroke="#a8977f" stroke-width="0.8" opacity="0.85"/>
<polygon points="-216.9,636.4 3.1,636.4 -34.3,648.5 -254.2,648.5" fill="#c3b39e"/>
<line x1="-216.9" y1="636.4" x2="-254.2" y2="648.2" stroke="#a8977f" stroke-width="0.8" opacity="0.85"/>
<polygon points="-249.2,636.4 38.3,636.4 -0.1,648.5 -287.7,648.5" fill="#c9baa5"/>
<line x1="-249.2" y1="636.4" x2="-287.7" y2="648.2" stroke="#a8977f" stroke-width="0.8" opacity="0.85"/>
<polygon points="1638.2,636.4 1894.3,636.4 1921.9,648.5 1665.8,648.5" fill="#c3b39e"/>
<line x1="1638.2" y1="636.4" x2="1665.8" y2="648.2" stroke="#a8977f" stroke-width="0.8" opacity="0.85"/>
<polygon points="2637.4,636.4 3023.9,636.4 3086.5,648.5 2700.0,648.5" fill="#c9baa5"/>
<line x1="2637.4" y1="636.4" x2="2700.0" y2="648.2" stroke="#a8977f" stroke-width="0.8" opacity="0.85"/>
<polygon points="-838.9,636.4 -627.5,636.4 -686.6,648.5 -898.0,648.5" fill="#c3b39e"/>
<line x1="-838.9" y1="636.4" x2="-898.0" y2="648.2" stroke="#a8977f" stroke-width="0.8" opacity="0.85"/>
<polygon points="518.0,636.4 756.9,636.4 745.3,648.5 506.3,648.5" fill="#c3b39e"/>
<line x1="518.0" y1="636.4" x2="506.3" y2="648.2" stroke="#a8977f" stroke-width="0.8" opacity="0.85"/>
<polygon points="2049.6,636.4 2287.6,636.4 2329.6,648.5 2091.6,648.5" fill="#c3b39e"/>
<line x1="2049.6" y1="636.4" x2="2091.6" y2="648.2" stroke="#a8977f" stroke-width="0.8" opacity="0.85"/>
<polygon points="1490.6,636.4 1645.8,636.4 1668.2,648.5 1513.0,648.5" fill="#c3b39e"/>
<line x1="1490.6" y1="636.4" x2="1513.0" y2="648.2" stroke="#a8977f" stroke-width="0.8" opacity="0.85"/>
<polygon points="2773.1,636.4 3012.1,636.4 3079.4,648.5 2840.4,648.5" fill="#c5b5a0"/>
<line x1="2773.1" y1="636.4" x2="2840.4" y2="648.2" stroke="#a8977f" stroke-width="0.8" opacity="0.85"/>
<polygon points="-428.3,636.4 -245.5,636.4 -290.3,648.5 -473.1,648.5" fill="#bfaf9a"/>
<line x1="-428.3" y1="636.4" x2="-473.1" y2="648.2" stroke="#a8977f" stroke-width="0.8" opacity="0.85"/>
<polygon points="-1353.0,636.4 -1091.1,636.4 -1168.3,648.5 -1430.1,648.5" fill="#c0b09b"/>
<line x1="-1353.0" y1="636.4" x2="-1430.1" y2="648.2" stroke="#a8977f" stroke-width="0.8" opacity="0.85"/>
<polygon points="419.0,636.4 764.6,636.4 749.5,648.5 403.9,648.5" fill="#bdad98"/>
<line x1="419.0" y1="636.4" x2="403.9" y2="648.2" stroke="#a8977f" stroke-width="0.8" opacity="0.85"/>
<rect x="0" y="648.2" width="1600" height="12.5" fill="#c5b5a0"/>
<line x1="0" y1="648.2" x2="1600" y2="648.2" stroke="#ab9b85" stroke-width="0.7" opacity="0.6"/>
<polygon points="1506.2,648.2 1916.1,648.2 1939.2,660.7 1529.3,660.7" fill="#c9baa5"/>
<line x1="1506.2" y1="648.2" x2="1529.3" y2="660.4" stroke="#a8977f" stroke-width="0.8" opacity="0.85"/>
<polygon points="1602.5,648.2 1882.4,648.2 1908.8,660.7 1629.0,660.7" fill="#c0b09b"/>
<line x1="1602.5" y1="648.2" x2="1629.0" y2="660.4" stroke="#a8977f" stroke-width="0.8" opacity="0.85"/>
<polygon points="-251.2,648.2 64.1,648.2 25.3,660.7 -290.0,660.7" fill="#c0b09b"/>
<line x1="-251.2" y1="648.2" x2="-290.0" y2="660.4" stroke="#a8977f" stroke-width="0.8" opacity="0.85"/>
<polygon points="2704.1,648.2 2870.6,648.2 2935.9,660.7 2769.3,660.7" fill="#c6b7a1"/>
<line x1="2704.1" y1="648.2" x2="2769.3" y2="660.4" stroke="#a8977f" stroke-width="0.8" opacity="0.85"/>
<polygon points="-284.9,648.2 -64.2,648.2 -104.1,660.7 -324.8,660.7" fill="#c5b5a0"/>
<line x1="-284.9" y1="648.2" x2="-324.8" y2="660.4" stroke="#a8977f" stroke-width="0.8" opacity="0.85"/>
<polygon points="-899.0,648.2 -500.9,648.2 -562.4,660.7 -960.5,660.7" fill="#bdad98"/>
<line x1="-899.0" y1="648.2" x2="-960.5" y2="660.4" stroke="#a8977f" stroke-width="0.8" opacity="0.85"/>
<polygon points="1476.4,648.2 1675.5,648.2 1697.5,660.7 1498.5,660.7" fill="#c3b39e"/>
<line x1="1476.4" y1="648.2" x2="1498.5" y2="660.4" stroke="#a8977f" stroke-width="0.8" opacity="0.85"/>
<polygon points="505.4,648.2 826.6,648.2 814.5,660.7 493.3,660.7" fill="#bdad98"/>
<line x1="505.4" y1="648.2" x2="493.3" y2="660.4" stroke="#a8977f" stroke-width="0.8" opacity="0.85"/>
<polygon points="-575.8,648.2 -223.0,648.2 -273.2,660.7 -625.9,660.7" fill="#bdad98"/>
<line x1="-575.8" y1="648.2" x2="-625.9" y2="660.4" stroke="#a8977f" stroke-width="0.8" opacity="0.85"/>
<polygon points="2740.3,648.2 3030.0,648.2 3096.5,660.7 2806.8,660.7" fill="#bfaf9a"/>
<line x1="2740.3" y1="648.2" x2="2806.8" y2="660.4" stroke="#a8977f" stroke-width="0.8" opacity="0.85"/>
<polygon points="-1245.5,648.2 -864.1,648.2 -937.8,660.7 -1319.2,660.7" fill="#bdad98"/>
<line x1="-1245.5" y1="648.2" x2="-1319.2" y2="660.4" stroke="#a8977f" stroke-width="0.8" opacity="0.85"/>
<polygon points="2841.4,648.2 3195.2,648.2 3265.2,660.7 2911.5,660.7" fill="#bfaf9a"/>
<line x1="2841.4" y1="648.2" x2="2911.5" y2="660.4" stroke="#a8977f" stroke-width="0.8" opacity="0.85"/>
<polygon points="2660.8,648.2 3027.3,648.2 3091.0,660.7 2724.5,660.7" fill="#bfaf9a"/>
<line x1="2660.8" y1="648.2" x2="2724.5" y2="660.4" stroke="#a8977f" stroke-width="0.8" opacity="0.85"/>
<polygon points="-1430.1,648.2 -1225.2,648.2 -1305.4,660.7 -1510.3,660.7" fill="#c6b7a1"/>
<line x1="-1430.1" y1="648.2" x2="-1510.3" y2="660.4" stroke="#a8977f" stroke-width="0.8" opacity="0.85"/>
<polygon points="355.0,648.2 669.3,648.2 651.9,660.7 337.6,660.7" fill="#c3b39e"/>
<line x1="355.0" y1="648.2" x2="337.6" y2="660.4" stroke="#a8977f" stroke-width="0.8" opacity="0.85"/>
<rect x="0" y="660.4" width="1600" height="13.0" fill="#c3b39e"/>
<line x1="0" y1="660.4" x2="1600" y2="660.4" stroke="#ab9b85" stroke-width="0.7" opacity="0.6"/>
<polygon points="1621.9,660.4 1774.9,660.4 1802.2,673.4 1649.2,673.4" fill="#bdad98"/>
<line x1="1621.9" y1="660.4" x2="1649.2" y2="673.1" stroke="#a8977f" stroke-width="0.8" opacity="0.85"/>
<polygon points="1534.0,660.4 1813.5,660.4 1837.7,673.4 1558.2,673.4" fill="#c9baa5"/>
<line x1="1534.0" y1="660.4" x2="1558.2" y2="673.1" stroke="#a8977f" stroke-width="0.8" opacity="0.85"/>
<polygon points="1952.2,660.4 2261.3,660.4 2300.2,673.4 1991.2,673.4" fill="#c5b5a0"/>
<line x1="1952.2" y1="660.4" x2="1991.2" y2="673.1" stroke="#a8977f" stroke-width="0.8" opacity="0.85"/>
<polygon points="2771.3,660.4 3093.7,660.4 3161.6,673.4 2839.2,673.4" fill="#c6b7a1"/>
<line x1="2771.3" y1="660.4" x2="2839.2" y2="673.1" stroke="#a8977f" stroke-width="0.8" opacity="0.85"/>
<polygon points="2659.8,660.4 2845.5,660.4 2909.4,673.4 2723.8,673.4" fill="#c0b09b"/>
<line x1="2659.8" y1="660.4" x2="2723.8" y2="673.1" stroke="#a8977f" stroke-width="0.8" opacity="0.85"/>
<polygon points="1492.3,660.4 1879.9,660.4 1902.6,673.4 1515.0,673.4" fill="#bdad98"/>
<line x1="1492.3" y1="660.4" x2="1515.0" y2="673.1" stroke="#a8977f" stroke-width="0.8" opacity="0.85"/>
<polygon points="1145.4,660.4 1505.5,660.4 1515.9,673.4 1155.8,673.4" fill="#bfaf9a"/>
<line x1="1145.4" y1="660.4" x2="1155.8" y2="673.1" stroke="#a8977f" stroke-width="0.8" opacity="0.85"/>
<polygon points="2671.7,660.4 3010.4,660.4 3074.8,673.4 2736.1,673.4" fill="#c0b09b"/>
<line x1="2671.7" y1="660.4" x2="2736.1" y2="673.1" stroke="#a8977f" stroke-width="0.8" opacity="0.85"/>
<polygon points="2720.4,660.4 2993.8,660.4 3059.9,673.4 2786.5,673.4" fill="#c5b5a0"/>
<line x1="2720.4" y1="660.4" x2="2786.5" y2="673.1" stroke="#a8977f" stroke-width="0.8" opacity="0.85"/>
<polygon points="-1508.3,660.4 -1196.2,660.4 -1279.6,673.4 -1591.7,673.4" fill="#c6b7a1"/>
<line x1="-1508.3" y1="660.4" x2="-1591.7" y2="673.1" stroke="#a8977f" stroke-width="0.8" opacity="0.85"/>
<polygon points="1179.0,660.4 1568.6,660.4 1580.3,673.4 1190.6,673.4" fill="#c6b7a1"/>
<line x1="1179.0" y1="660.4" x2="1190.6" y2="673.1" stroke="#a8977f" stroke-width="0.8" opacity="0.85"/>
<rect x="0" y="673.1" width="1600" height="13.5" fill="#c9baa5"/>
<line x1="0" y1="673.1" x2="1600" y2="673.1" stroke="#ab9b85" stroke-width="0.7" opacity="0.6"/>
<polygon points="1559.6,673.1 1967.2,673.1 1992.4,686.7 1584.8,686.7" fill="#c6b7a1"/>
<line x1="1559.6" y1="673.1" x2="1584.8" y2="686.4" stroke="#a8977f" stroke-width="0.8" opacity="0.85"/>
<polygon points="2334.0,673.1 2730.0,673.1 2782.7,686.7 2386.7,686.7" fill="#c6b7a1"/>
<line x1="2334.0" y1="673.1" x2="2386.7" y2="686.4" stroke="#a8977f" stroke-width="0.8" opacity="0.85"/>
<polygon points="1549.0,673.1 1746.5,673.1 1771.3,686.7 1573.9,686.7" fill="#c3b39e"/>
<line x1="1549.0" y1="673.1" x2="1573.9" y2="686.4" stroke="#a8977f" stroke-width="0.8" opacity="0.85"/>
<polygon points="1958.9,673.1 2141.6,673.1 2180.9,686.7 1998.2,686.7" fill="#c3b39e"/>
<line x1="1958.9" y1="673.1" x2="1998.2" y2="686.4" stroke="#a8977f" stroke-width="0.8" opacity="0.85"/>
<polygon points="-329.6,673.1 -18.0,673.1 -59.9,686.7 -371.4,686.7" fill="#c6b7a1"/>
<line x1="-329.6" y1="673.1" x2="-371.4" y2="686.4" stroke="#a8977f" stroke-width="0.8" opacity="0.85"/>
<polygon points="1731.5,673.1 2025.1,673.1 2056.4,686.7 1762.8,686.7" fill="#c3b39e"/>
<line x1="1731.5" y1="673.1" x2="1762.8" y2="686.4" stroke="#a8977f" stroke-width="0.8" opacity="0.85"/>
<polygon points="2832.2,673.1 3037.0,673.1 3107.4,686.7 2902.5,686.7" fill="#bdad98"/>
<line x1="2832.2" y1="673.1" x2="2902.5" y2="686.4" stroke="#a8977f" stroke-width="0.8" opacity="0.85"/>
<polygon points="-361.0,673.1 -49.4,673.1 -92.4,686.7 -403.9,686.7" fill="#c0b09b"/>
<line x1="-361.0" y1="673.1" x2="-403.9" y2="686.4" stroke="#a8977f" stroke-width="0.8" opacity="0.85"/>
<polygon points="1518.1,673.1 1778.9,673.1 1802.6,686.7 1541.8,686.7" fill="#bfaf9a"/>
<line x1="1518.1" y1="673.1" x2="1541.8" y2="686.4" stroke="#a8977f" stroke-width="0.8" opacity="0.85"/>
<polygon points="-679.3,673.1 -424.8,673.1 -479.1,686.7 -733.6,686.7" fill="#c0b09b"/>
<line x1="-679.3" y1="673.1" x2="-733.6" y2="686.4" stroke="#a8977f" stroke-width="0.8" opacity="0.85"/>
<polygon points="-1052.2,673.1 -879.0,673.1 -946.5,686.7 -1119.7,686.7" fill="#c9baa5"/>
<line x1="-1052.2" y1="673.1" x2="-1119.7" y2="686.4" stroke="#a8977f" stroke-width="0.8" opacity="0.85"/>
<polygon points="2179.6,673.1 2419.4,673.1 2466.6,686.7 2226.8,686.7" fill="#c0b09b"/>
<line x1="2179.6" y1="673.1" x2="2226.8" y2="686.4" stroke="#a8977f" stroke-width="0.8" opacity="0.85"/>
<polygon points="2868.6,673.1 3276.2,673.1 3347.9,686.7 2940.3,686.7" fill="#c6b7a1"/>
<line x1="2868.6" y1="673.1" x2="2940.3" y2="686.4" stroke="#a8977f" stroke-width="0.8" opacity="0.85"/>
<polygon points="-1403.2,673.1 -1037.8,673.1 -1117.8,686.7 -1483.2,686.7" fill="#bfaf9a"/>
<line x1="-1403.2" y1="673.1" x2="-1483.2" y2="686.4" stroke="#a8977f" stroke-width="0.8" opacity="0.85"/>
<polygon points="1151.7,673.1 1579.4,673.1 1590.2,686.7 1162.4,686.7" fill="#c6b7a1"/>
<line x1="1151.7" y1="673.1" x2="1162.4" y2="686.4" stroke="#a8977f" stroke-width="0.8" opacity="0.85"/>
<polygon points="1567.8,673.1 1823.4,673.1 1848.9,686.7 1593.3,686.7" fill="#c6b7a1"/>
<line x1="1567.8" y1="673.1" x2="1593.3" y2="686.4" stroke="#a8977f" stroke-width="0.8" opacity="0.85"/>
<polygon points="2738.1,673.1 3090.8,673.1 3157.8,686.7 2805.1,686.7" fill="#c6b7a1"/>
<line x1="2738.1" y1="673.1" x2="2805.1" y2="686.4" stroke="#a8977f" stroke-width="0.8" opacity="0.85"/>
<polygon points="2982.3,673.1 3401.5,673.1 3477.2,686.7 3057.9,686.7" fill="#c9baa5"/>
<line x1="2982.3" y1="673.1" x2="3057.9" y2="686.4" stroke="#a8977f" stroke-width="0.8" opacity="0.85"/>
<polygon points="2787.6,673.1 2962.9,673.1 3031.7,686.7 2856.4,686.7" fill="#bfaf9a"/>
<line x1="2787.6" y1="673.1" x2="2856.4" y2="686.4" stroke="#a8977f" stroke-width="0.8" opacity="0.85"/>
<polygon points="-1589.8,673.1 -1274.0,673.1 -1360.6,686.7 -1676.4,686.7" fill="#c3b39e"/>
<line x1="-1589.8" y1="673.1" x2="-1676.4" y2="686.4" stroke="#a8977f" stroke-width="0.8" opacity="0.85"/>
<polygon points="1367.0,673.1 1806.3,673.1 1824.7,686.7 1385.4,686.7" fill="#c3b39e"/>
<line x1="1367.0" y1="673.1" x2="1385.4" y2="686.4" stroke="#a8977f" stroke-width="0.8" opacity="0.85"/>
<rect x="0" y="686.4" width="1600" height="14.1" fill="#c5b5a0"/>
<line x1="0" y1="686.4" x2="1600" y2="686.4" stroke="#ab9b85" stroke-width="0.7" opacity="0.6"/>
<polygon points="2381.6,686.4 2693.3,686.4 2747.9,700.5 2436.2,700.5" fill="#c3b39e"/>
<line x1="2381.6" y1="686.4" x2="2436.2" y2="700.2" stroke="#a8977f" stroke-width="0.8" opacity="0.85"/>
<polygon points="1683.9,686.4 2126.8,686.4 2156.5,700.5 1713.7,700.5" fill="#bfaf9a"/>
<line x1="1683.9" y1="686.4" x2="1713.7" y2="700.2" stroke="#a8977f" stroke-width="0.8" opacity="0.85"/>
<polygon points="1581.0,686.4 2030.5,686.4 2056.5,700.5 1607.1,700.5" fill="#c6b7a1"/>
<line x1="1581.0" y1="686.4" x2="1607.1" y2="700.2" stroke="#a8977f" stroke-width="0.8" opacity="0.85"/>
<polygon points="2588.6,686.4 2963.7,686.4 3025.6,700.5 2650.6,700.5" fill="#c0b09b"/>
<line x1="2588.6" y1="686.4" x2="2650.6" y2="700.2" stroke="#a8977f" stroke-width="0.8" opacity="0.85"/>
<polygon points="-373.6,686.4 -70.7,686.4 -114.3,700.5 -417.2,700.5" fill="#c9baa5"/>
<line x1="-373.6" y1="686.4" x2="-417.2" y2="700.2" stroke="#a8977f" stroke-width="0.8" opacity="0.85"/>
<polygon points="-410.9,686.4 30.9,686.4 -14.0,700.5 -455.8,700.5" fill="#c0b09b"/>
<line x1="-410.9" y1="686.4" x2="-455.8" y2="700.2" stroke="#a8977f" stroke-width="0.8" opacity="0.85"/>
<polygon points="1755.6,686.4 2173.4,686.4 2205.7,700.5 1787.9,700.5" fill="#c5b5a0"/>
<line x1="1755.6" y1="686.4" x2="1787.9" y2="700.2" stroke="#a8977f" stroke-width="0.8" opacity="0.85"/>
<polygon points="1537.8,686.4 1877.9,686.4 1902.4,700.5 1562.3,700.5" fill="#c6b7a1"/>
<line x1="1537.8" y1="686.4" x2="1562.3" y2="700.2" stroke="#a8977f" stroke-width="0.8" opacity="0.85"/>
<polygon points="2646.7,686.4 3072.1,686.4 3136.2,700.5 2710.8,700.5" fill="#bdad98"/>
<line x1="2646.7" y1="686.4" x2="2710.8" y2="700.2" stroke="#a8977f" stroke-width="0.8" opacity="0.85"/>
<polygon points="3056.0,686.4 3340.3,686.4 3418.9,700.5 3134.6,700.5" fill="#c9baa5"/>
<line x1="3056.0" y1="686.4" x2="3134.6" y2="700.2" stroke="#a8977f" stroke-width="0.8" opacity="0.85"/>
<polygon points="-616.2,686.4 -429.2,686.4 -481.5,700.5 -668.5,700.5" fill="#c5b5a0"/>
<line x1="-616.2" y1="686.4" x2="-668.5" y2="700.2" stroke="#a8977f" stroke-width="0.8" opacity="0.85"/>
<polygon points="2858.5,686.4 3295.9,686.4 3367.5,700.5 2930.1,700.5" fill="#c0b09b"/>
<line x1="2858.5" y1="686.4" x2="2930.1" y2="700.2" stroke="#a8977f" stroke-width="0.8" opacity="0.85"/>
<polygon points="1512.0,686.4 1750.4,686.4 1774.0,700.5 1535.6,700.5" fill="#bfaf9a"/>
<line x1="1512.0" y1="686.4" x2="1535.6" y2="700.2" stroke="#a8977f" stroke-width="0.8" opacity="0.85"/>
<rect x="0" y="700.2" width="1600" height="14.6" fill="#c0b09b"/>
<line x1="0" y1="700.2" x2="1600" y2="700.2" stroke="#ab9b85" stroke-width="0.7" opacity="0.6"/>
<polygon points="1606.0,700.2 1994.5,700.2 2021.6,714.8 1633.1,714.8" fill="#bdad98"/>
<line x1="1606.0" y1="700.2" x2="1633.1" y2="714.5" stroke="#a8977f" stroke-width="0.8" opacity="0.85"/>
<polygon points="2653.6,700.2 2851.8,700.2 2916.4,714.8 2718.2,714.8" fill="#bfaf9a"/>
<line x1="2653.6" y1="700.2" x2="2718.2" y2="714.5" stroke="#a8977f" stroke-width="0.8" opacity="0.85"/>
<polygon points="1561.4,700.2 1973.6,700.2 1999.1,714.8 1586.9,714.8" fill="#c0b09b"/>
<line x1="1561.4" y1="700.2" x2="1586.9" y2="714.5" stroke="#a8977f" stroke-width="0.8" opacity="0.85"/>
<polygon points="-790.2,700.2 -477.6,700.2 -536.3,714.8 -848.9,714.8" fill="#c9baa5"/>
<line x1="-790.2" y1="700.2" x2="-848.9" y2="714.5" stroke="#a8977f" stroke-width="0.8" opacity="0.85"/>
<polygon points="-1188.7,700.2 -924.8,700.2 -997.8,714.8 -1261.7,714.8" fill="#c0b09b"/>
<line x1="-1188.7" y1="700.2" x2="-1261.7" y2="714.5" stroke="#a8977f" stroke-width="0.8" opacity="0.85"/>
<polygon points="2277.0,700.2 2564.7,700.2 2615.8,714.8 2328.1,714.8" fill="#bdad98"/>
<line x1="2277.0" y1="700.2" x2="2328.1" y2="714.5" stroke="#a8977f" stroke-width="0.8" opacity="0.85"/>
<polygon points="2711.9,700.2 3005.2,700.2 3071.9,714.8 2778.6,714.8" fill="#bdad98"/>
<line x1="2711.9" y1="700.2" x2="2778.6" y2="714.5" stroke="#a8977f" stroke-width="0.8" opacity="0.85"/>
<polygon points="1179.7,700.2 1620.2,700.2 1632.0,714.8 1191.5,714.8" fill="#c3b39e"/>
<line x1="1179.7" y1="700.2" x2="1191.5" y2="714.5" stroke="#a8977f" stroke-width="0.8" opacity="0.85"/>
<polygon points="-1770.8,700.2 -1423.1,700.2 -1517.0,714.8 -1864.7,714.8" fill="#bfaf9a"/>
<line x1="-1770.8" y1="700.2" x2="-1864.7" y2="714.5" stroke="#a8977f" stroke-width="0.8" opacity="0.85"/>
<polygon points="436.0,700.2 864.1,700.2 849.3,714.8 421.2,714.8" fill="#bdad98"/>
<line x1="436.0" y1="700.2" x2="421.2" y2="714.5" stroke="#a8977f" stroke-width="0.8" opacity="0.85"/>
<rect x="0" y="714.5" width="1600" height="15.2" fill="#bdad98"/>
<line x1="0" y1="714.5" x2="1600" y2="714.5" stroke="#ab9b85" stroke-width="0.7" opacity="0.6"/>
<polygon points="1633.1,714.5 2117.5,714.5 2145.7,729.7 1661.2,729.7" fill="#c0b09b"/>
<line x1="1633.1" y1="714.5" x2="1661.2" y2="729.4" stroke="#a8977f" stroke-width="0.8" opacity="0.85"/>
<polygon points="2076.7,714.5 2329.0,714.5 2373.1,729.7 2120.8,729.7" fill="#c3b39e"/>
<line x1="2076.7" y1="714.5" x2="2120.8" y2="729.4" stroke="#a8977f" stroke-width="0.8" opacity="0.85"/>
<polygon points="-466.8,714.5 -166.5,714.5 -213.8,729.7 -514.1,729.7" fill="#c6b7a1"/>
<line x1="-466.8" y1="714.5" x2="-514.1" y2="729.4" stroke="#a8977f" stroke-width="0.8" opacity="0.85"/>
<polygon points="-1236.2,714.5 -813.9,714.5 -888.9,729.7 -1311.2,729.7" fill="#c9baa5"/>
<line x1="-1236.2" y1="714.5" x2="-1311.2" y2="729.4" stroke="#a8977f" stroke-width="0.8" opacity="0.85"/>
<polygon points="1588.0,714.5 2051.4,714.5 2077.9,729.7 1614.5,729.7" fill="#bdad98"/>
<line x1="1588.0" y1="714.5" x2="1614.5" y2="729.4" stroke="#a8977f" stroke-width="0.8" opacity="0.85"/>
<polygon points="-1261.6,714.5 -1004.7,714.5 -1080.6,729.7 -1337.5,729.7" fill="#c3b39e"/>
<line x1="-1261.6" y1="714.5" x2="-1337.5" y2="729.4" stroke="#a8977f" stroke-width="0.8" opacity="0.85"/>
<polygon points="-1650.6,714.5 -1318.6,714.5 -1408.5,729.7 -1740.5,729.7" fill="#c3b39e"/>
<line x1="-1650.6" y1="714.5" x2="-1740.5" y2="729.4" stroke="#a8977f" stroke-width="0.8" opacity="0.85"/>
<polygon points="3249.9,714.5 3696.9,714.5 3783.1,729.7 3336.2,729.7" fill="#c9baa5"/>
<line x1="3249.9" y1="714.5" x2="3336.2" y2="729.4" stroke="#a8977f" stroke-width="0.8" opacity="0.85"/>
<polygon points="-722.9,714.5 -320.5,714.5 -377.1,729.7 -779.4,729.7" fill="#c5b5a0"/>
<line x1="-722.9" y1="714.5" x2="-779.4" y2="729.4" stroke="#a8977f" stroke-width="0.8" opacity="0.85"/>
<polygon points="384.0,714.5 682.0,714.5 665.2,729.7 367.2,729.7" fill="#c0b09b"/>
<line x1="384.0" y1="714.5" x2="367.2" y2="729.4" stroke="#a8977f" stroke-width="0.8" opacity="0.85"/>
<rect x="0" y="729.4" width="1600" height="15.8" fill="#bfaf9a"/>
<line x1="0" y1="729.4" x2="1600" y2="729.4" stroke="#ab9b85" stroke-width="0.7" opacity="0.6"/>
<polygon points="1666.2,729.4 2039.3,729.4 2068.8,745.2 1695.7,745.2" fill="#c5b5a0"/>
<line x1="1666.2" y1="729.4" x2="1695.7" y2="744.9" stroke="#a8977f" stroke-width="0.8" opacity="0.85"/>
<polygon points="2556.4,729.4 2752.1,729.4 2813.6,745.2 2618.0,745.2" fill="#c5b5a0"/>
<line x1="2556.4" y1="729.4" x2="2618.0" y2="744.9" stroke="#a8977f" stroke-width="0.8" opacity="0.85"/>
<polygon points="1656.2,729.4 1912.6,729.4 1941.7,745.2 1685.3,745.2" fill="#bdad98"/>
<line x1="1656.2" y1="729.4" x2="1685.3" y2="744.9" stroke="#a8977f" stroke-width="0.8" opacity="0.85"/>
<polygon points="2126.0,729.4 2347.2,729.4 2393.2,745.2 2172.1,745.2" fill="#c9baa5"/>
<line x1="2126.0" y1="729.4" x2="2172.1" y2="744.9" stroke="#a8977f" stroke-width="0.8" opacity="0.85"/>
<polygon points="-518.1,729.4 -166.9,729.4 -216.3,745.2 -567.5,745.2" fill="#bdad98"/>
<line x1="-518.1" y1="729.4" x2="-567.5" y2="744.9" stroke="#a8977f" stroke-width="0.8" opacity="0.85"/>
<polygon points="1857.7,729.4 2274.5,729.4 2310.9,745.2 1894.0,745.2" fill="#c6b7a1"/>
<line x1="1857.7" y1="729.4" x2="1894.0" y2="744.9" stroke="#a8977f" stroke-width="0.8" opacity="0.85"/>
<polygon points="3003.1,729.4 3371.3,729.4 3449.0,745.2 3080.8,745.2" fill="#bdad98"/>
<line x1="3003.1" y1="729.4" x2="3080.8" y2="744.9" stroke="#a8977f" stroke-width="0.8" opacity="0.85"/>
<polygon points="-1311.1,729.4 -927.1,729.4 -1005.0,745.2 -1389.1,745.2" fill="#bdad98"/>
<line x1="-1311.1" y1="729.4" x2="-1389.1" y2="744.9" stroke="#a8977f" stroke-width="0.8" opacity="0.85"/>
<polygon points="-907.1,729.4 -679.9,729.4 -743.3,745.2 -970.5,745.2" fill="#c9baa5"/>
<line x1="-907.1" y1="729.4" x2="-970.5" y2="744.9" stroke="#a8977f" stroke-width="0.8" opacity="0.85"/>
<polygon points="-1334.4,729.4 -1130.3,729.4 -1209.1,745.2 -1413.3,745.2" fill="#c6b7a1"/>
<line x1="-1334.4" y1="729.4" x2="-1413.3" y2="744.9" stroke="#a8977f" stroke-width="0.8" opacity="0.85"/>
<polygon points="2383.2,729.4 2766.0,729.4 2821.4,745.2 2438.6,745.2" fill="#c9baa5"/>
<line x1="2383.2" y1="729.4" x2="2438.6" y2="744.9" stroke="#a8977f" stroke-width="0.8" opacity="0.85"/>
<polygon points="3176.2,729.4 3543.2,729.4 3627.1,745.2 3260.1,745.2" fill="#c9baa5"/>
<line x1="3176.2" y1="729.4" x2="3260.1" y2="744.9" stroke="#a8977f" stroke-width="0.8" opacity="0.85"/>
<polygon points="2850.1,729.4 3147.9,729.4 3220.0,745.2 2922.3,745.2" fill="#c9baa5"/>
<line x1="2850.1" y1="729.4" x2="2922.3" y2="744.9" stroke="#a8977f" stroke-width="0.8" opacity="0.85"/>
<polygon points="1199.4,729.4 1673.3,729.4 1685.9,745.2 1212.0,745.2" fill="#c5b5a0"/>
<line x1="1199.4" y1="729.4" x2="1212.0" y2="744.9" stroke="#a8977f" stroke-width="0.8" opacity="0.85"/>
<polygon points="1667.3,729.4 2061.0,729.4 2090.5,745.2 1696.8,745.2" fill="#bdad98"/>
<line x1="1667.3" y1="729.4" x2="1696.8" y2="744.9" stroke="#a8977f" stroke-width="0.8" opacity="0.85"/>
<polygon points="3335.2,729.4 3535.7,729.4 3625.4,745.2 3424.9,745.2" fill="#c9baa5"/>
<line x1="3335.2" y1="729.4" x2="3424.9" y2="744.9" stroke="#a8977f" stroke-width="0.8" opacity="0.85"/>
<polygon points="526.0,729.4 842.0,729.4 830.3,745.2 514.3,745.2" fill="#c3b39e"/>
<line x1="526.0" y1="729.4" x2="514.3" y2="744.9" stroke="#a8977f" stroke-width="0.8" opacity="0.85"/>
<rect x="0" y="744.9" width="1600" height="16.4" fill="#bfaf9a"/>
<line x1="0" y1="744.9" x2="1600" y2="744.9" stroke="#ab9b85" stroke-width="0.7" opacity="0.6"/>
<polygon points="1688.6,744.9 1980.7,744.9 2011.1,761.3 1719.0,761.3" fill="#bfaf9a"/>
<line x1="1688.6" y1="744.9" x2="1719.0" y2="761.0" stroke="#a8977f" stroke-width="0.8" opacity="0.85"/>
<polygon points="1810.0,744.9 2212.9,744.9 2247.7,761.3 1844.8,761.3" fill="#c0b09b"/>
<line x1="1810.0" y1="744.9" x2="1844.8" y2="761.0" stroke="#a8977f" stroke-width="0.8" opacity="0.85"/>
<polygon points="1685.4,744.9 2190.3,744.9 2220.6,761.3 1715.7,761.3" fill="#c3b39e"/>
<line x1="1685.4" y1="744.9" x2="1715.7" y2="761.0" stroke="#a8977f" stroke-width="0.8" opacity="0.85"/>
<polygon points="-561.3,744.9 -183.6,744.9 -234.7,761.3 -612.4,761.3" fill="#bfaf9a"/>
<line x1="-561.3" y1="744.9" x2="-612.4" y2="761.0" stroke="#a8977f" stroke-width="0.8" opacity="0.85"/>
<polygon points="-609.4,744.9 -153.6,744.9 -206.4,761.3 -662.2,761.3" fill="#c9baa5"/>
<line x1="-609.4" y1="744.9" x2="-662.2" y2="761.0" stroke="#a8977f" stroke-width="0.8" opacity="0.85"/>
<polygon points="1897.1,744.9 2321.4,744.9 2359.3,761.3 1935.0,761.3" fill="#c9baa5"/>
<line x1="1897.1" y1="744.9" x2="1935.0" y2="761.0" stroke="#a8977f" stroke-width="0.8" opacity="0.85"/>
<polygon points="3214.2,744.9 3724.2,744.9 3809.8,761.3 3299.9,761.3" fill="#c5b5a0"/>
<line x1="3214.2" y1="744.9" x2="3299.9" y2="761.0" stroke="#a8977f" stroke-width="0.8" opacity="0.85"/>
<polygon points="3080.8,744.9 3429.6,744.9 3510.4,761.3 3161.6,761.3" fill="#c0b09b"/>
<line x1="3080.8" y1="744.9" x2="3161.6" y2="761.0" stroke="#a8977f" stroke-width="0.8" opacity="0.85"/>
<polygon points="-594.8,744.9 -196.9,744.9 -249.2,761.3 -647.1,761.3" fill="#c9baa5"/>
<line x1="-594.8" y1="744.9" x2="-647.1" y2="761.0" stroke="#a8977f" stroke-width="0.8" opacity="0.85"/>
<polygon points="1640.3,744.9 1943.8,744.9 1972.4,761.3 1669.0,761.3" fill="#c5b5a0"/>
<line x1="1640.3" y1="744.9" x2="1669.0" y2="761.0" stroke="#a8977f" stroke-width="0.8" opacity="0.85"/>
<polygon points="-1411.3,744.9 -1141.9,744.9 -1223.8,761.3 -1493.2,761.3" fill="#c3b39e"/>
<line x1="-1411.3" y1="744.9" x2="-1493.2" y2="761.0" stroke="#a8977f" stroke-width="0.8" opacity="0.85"/>
<polygon points="3097.5,744.9 3330.5,744.9 3411.9,761.3 3178.9,761.3" fill="#c6b7a1"/>
<line x1="3097.5" y1="744.9" x2="3178.9" y2="761.0" stroke="#a8977f" stroke-width="0.8" opacity="0.85"/>
<polygon points="3388.4,744.9 3642.7,744.9 3734.7,761.3 3480.4,761.3" fill="#bfaf9a"/>
<line x1="3388.4" y1="744.9" x2="3480.4" y2="761.0" stroke="#a8977f" stroke-width="0.8" opacity="0.85"/>
<polygon points="-841.3,744.9 -453.5,744.9 -514.8,761.3 -902.6,761.3" fill="#c5b5a0"/>
<line x1="-841.3" y1="744.9" x2="-902.6" y2="761.0" stroke="#a8977f" stroke-width="0.8" opacity="0.85"/>
<polygon points="393.0,744.9 872.7,744.9 856.2,761.3 376.4,761.3" fill="#c6b7a1"/>
<line x1="393.0" y1="744.9" x2="376.4" y2="761.0" stroke="#a8977f" stroke-width="0.8" opacity="0.85"/>
<rect x="0" y="761.0" width="1600" height="17.1" fill="#c3b39e"/>
<line x1="0" y1="761.0" x2="1600" y2="761.0" stroke="#ab9b85" stroke-width="0.7" opacity="0.6"/>
<polygon points="1844.8,761.0 2144.8,761.0 2181.0,778.1 1880.9,778.1" fill="#c6b7a1"/>
<line x1="1844.8" y1="761.0" x2="1880.9" y2="777.8" stroke="#a8977f" stroke-width="0.8" opacity="0.85"/>
<polygon points="2219.0,761.0 2492.9,761.0 2542.7,778.1 2268.7,778.1" fill="#c5b5a0"/>
<line x1="2219.0" y1="761.0" x2="2268.7" y2="777.8" stroke="#a8977f" stroke-width="0.8" opacity="0.85"/>
<polygon points="2927.7,761.0 3150.8,761.0 3226.3,778.1 3003.2,778.1" fill="#bfaf9a"/>
<line x1="2927.7" y1="761.0" x2="3003.2" y2="777.8" stroke="#a8977f" stroke-width="0.8" opacity="0.85"/>
<polygon points="-608.5,761.0 -222.3,761.0 -275.3,778.1 -661.5,778.1" fill="#c0b09b"/>
<line x1="-608.5" y1="761.0" x2="-661.5" y2="777.8" stroke="#a8977f" stroke-width="0.8" opacity="0.85"/>
<polygon points="-654.1,761.0 -378.8,761.0 -433.5,778.1 -708.8,778.1" fill="#c9baa5"/>
<line x1="-654.1" y1="761.0" x2="-708.8" y2="777.8" stroke="#a8977f" stroke-width="0.8" opacity="0.85"/>
<polygon points="2254.8,761.0 2669.7,761.0 2720.7,778.1 2305.8,778.1" fill="#bdad98"/>
<line x1="2254.8" y1="761.0" x2="2305.8" y2="777.8" stroke="#a8977f" stroke-width="0.8" opacity="0.85"/>
<polygon points="3309.1,761.0 3827.0,761.0 3916.4,778.1 3398.5,778.1" fill="#c6b7a1"/>
<line x1="3309.1" y1="761.0" x2="3398.5" y2="777.8" stroke="#a8977f" stroke-width="0.8" opacity="0.85"/>
<polygon points="2494.9,761.0 2939.9,761.0 2999.7,778.1 2554.8,778.1" fill="#c0b09b"/>
<line x1="2494.9" y1="761.0" x2="2554.8" y2="777.8" stroke="#a8977f" stroke-width="0.8" opacity="0.85"/>
<polygon points="-1926.2,761.0 -1524.4,761.0 -1625.3,778.1 -2027.2,778.1" fill="#c6b7a1"/>
<line x1="-1926.2" y1="761.0" x2="-2027.2" y2="777.8" stroke="#a8977f" stroke-width="0.8" opacity="0.85"/>
<polygon points="2993.4,761.0 3378.3,761.0 3456.3,778.1 3071.4,778.1" fill="#bdad98"/>
<line x1="2993.4" y1="761.0" x2="3071.4" y2="777.8" stroke="#a8977f" stroke-width="0.8" opacity="0.85"/>
<polygon points="3484.5,761.0 3941.2,761.0 4037.0,778.1 3580.3,778.1" fill="#c0b09b"/>
<line x1="3484.5" y1="761.0" x2="3580.3" y2="777.8" stroke="#a8977f" stroke-width="0.8" opacity="0.85"/>
<polygon points="-895.5,761.0 -428.4,761.0 -491.9,778.1 -959.0,778.1" fill="#c5b5a0"/>
<line x1="-895.5" y1="761.0" x2="-959.0" y2="777.8" stroke="#a8977f" stroke-width="0.8" opacity="0.85"/>
<polygon points="-2165.4,761.0 -1875.8,761.0 -1985.4,778.1 -2275.1,778.1" fill="#bfaf9a"/>
<line x1="-2165.4" y1="761.0" x2="-2275.1" y2="777.8" stroke="#a8977f" stroke-width="0.8" opacity="0.85"/>
<polygon points="284.0,761.0 739.3,761.0 718.8,778.1 263.4,778.1" fill="#c3b39e"/>
<line x1="284.0" y1="761.0" x2="263.4" y2="777.8" stroke="#a8977f" stroke-width="0.8" opacity="0.85"/>
<rect x="0" y="777.8" width="1600" height="17.7" fill="#c5b5a0"/>
<line x1="0" y1="777.8" x2="1600" y2="777.8" stroke="#ab9b85" stroke-width="0.7" opacity="0.6"/>
<polygon points="1748.4,777.8 2256.8,777.8 2289.6,795.5 1781.2,795.5" fill="#bfaf9a"/>
<line x1="1748.4" y1="777.8" x2="1781.2" y2="795.2" stroke="#a8977f" stroke-width="0.8" opacity="0.85"/>
<polygon points="1967.3,777.8 2202.6,777.8 2243.3,795.5 2008.1,795.5" fill="#c3b39e"/>
<line x1="1967.3" y1="777.8" x2="2008.1" y2="795.2" stroke="#a8977f" stroke-width="0.8" opacity="0.85"/>
<polygon points="3398.3,777.8 3618.7,777.8 3711.7,795.5 3491.3,795.5" fill="#c0b09b"/>
<line x1="3398.3" y1="777.8" x2="3491.3" y2="795.2" stroke="#a8977f" stroke-width="0.8" opacity="0.85"/>
<polygon points="3252.8,777.8 3536.8,777.8 3624.4,795.5 3340.5,795.5" fill="#c0b09b"/>
<line x1="3252.8" y1="777.8" x2="3340.5" y2="795.2" stroke="#a8977f" stroke-width="0.8" opacity="0.85"/>
<polygon points="-700.5,777.8 -446.3,777.8 -502.8,795.5 -757.0,795.5" fill="#c5b5a0"/>
<line x1="-700.5" y1="777.8" x2="-757.0" y2="795.2" stroke="#a8977f" stroke-width="0.8" opacity="0.85"/>
<polygon points="-1548.1,777.8 -1097.8,777.8 -1185.3,795.5 -1635.6,795.5" fill="#c9baa5"/>
<line x1="-1548.1" y1="777.8" x2="-1635.6" y2="795.2" stroke="#a8977f" stroke-width="0.8" opacity="0.85"/>
<polygon points="1707.1,777.8 2123.6,777.8 2154.8,795.5 1738.4,795.5" fill="#c6b7a1"/>
<line x1="1707.1" y1="777.8" x2="1738.4" y2="795.2" stroke="#a8977f" stroke-width="0.8" opacity="0.85"/>
<polygon points="376.3,777.8 934.7,777.8 917.4,795.5 359.0,795.5" fill="#c6b7a1"/>
<line x1="376.3" y1="777.8" x2="359.0" y2="795.2" stroke="#a8977f" stroke-width="0.8" opacity="0.85"/>
<polygon points="-1115.6,777.8 -906.0,777.8 -977.8,795.5 -1187.3,795.5" fill="#bdad98"/>
<line x1="-1115.6" y1="777.8" x2="-1187.3" y2="795.2" stroke="#a8977f" stroke-width="0.8" opacity="0.85"/>
<polygon points="2549.7,777.8 2795.8,777.8 2857.8,795.5 2611.7,795.5" fill="#c0b09b"/>
<line x1="2549.7" y1="777.8" x2="2611.7" y2="795.2" stroke="#a8977f" stroke-width="0.8" opacity="0.85"/>
<polygon points="3437.1,777.8 3646.7,777.8 3741.1,795.5 3531.5,795.5" fill="#c9baa5"/>
<line x1="3437.1" y1="777.8" x2="3531.5" y2="795.2" stroke="#a8977f" stroke-width="0.8" opacity="0.85"/>
<polygon points="1238.6,777.8 1805.2,777.8 1819.3,795.5 1252.8,795.5" fill="#bfaf9a"/>
<line x1="1238.6" y1="777.8" x2="1252.8" y2="795.2" stroke="#a8977f" stroke-width="0.8" opacity="0.85"/>
<polygon points="3620.4,777.8 3992.3,777.8 4093.3,795.5 3721.5,795.5" fill="#c9baa5"/>
<line x1="3620.4" y1="777.8" x2="3721.5" y2="795.2" stroke="#a8977f" stroke-width="0.8" opacity="0.85"/>
<polygon points="3258.6,777.8 3803.5,777.8 3891.4,795.5 3346.5,795.5" fill="#bfaf9a"/>
<line x1="3258.6" y1="777.8" x2="3346.5" y2="795.2" stroke="#a8977f" stroke-width="0.8" opacity="0.85"/>
<polygon points="3585.4,777.8 4000.5,777.8 4100.3,795.5 3685.2,795.5" fill="#bdad98"/>
<line x1="3585.4" y1="777.8" x2="3685.2" y2="795.2" stroke="#a8977f" stroke-width="0.8" opacity="0.85"/>
<polygon points="-2281.2,777.8 -2009.5,777.8 -2123.7,795.5 -2395.5,795.5" fill="#bfaf9a"/>
<line x1="-2281.2" y1="777.8" x2="-2395.5" y2="795.2" stroke="#a8977f" stroke-width="0.8" opacity="0.85"/>
<polygon points="511.0,777.8 991.0,777.8 978.6,795.5 498.6,795.5" fill="#bdad98"/>
<line x1="511.0" y1="777.8" x2="498.6" y2="795.2" stroke="#a8977f" stroke-width="0.8" opacity="0.85"/>
<rect x="0" y="795.2" width="1600" height="18.4" fill="#bfaf9a"/>
<line x1="0" y1="795.2" x2="1600" y2="795.2" stroke="#ab9b85" stroke-width="0.7" opacity="0.6"/>
<polygon points="2820.8,795.2 3323.9,795.2 3396.0,813.6 2892.9,813.6" fill="#bdad98"/>
<line x1="2820.8" y1="795.2" x2="2892.9" y2="813.3" stroke="#a8977f" stroke-width="0.8" opacity="0.85"/>
<polygon points="1921.5,795.2 2259.2,795.2 2298.4,813.6 1960.7,813.6" fill="#bfaf9a"/>
<line x1="1921.5" y1="795.2" x2="1960.7" y2="813.3" stroke="#a8977f" stroke-width="0.8" opacity="0.85"/>
<polygon points="1784.3,795.2 2189.4,795.2 2223.6,813.6 1818.5,813.6" fill="#bfaf9a"/>
<line x1="1784.3" y1="795.2" x2="1818.5" y2="813.3" stroke="#a8977f" stroke-width="0.8" opacity="0.85"/>
<polygon points="2321.6,795.2 2810.7,795.2 2864.6,813.6 2375.4,813.6" fill="#c6b7a1"/>
<line x1="2321.6" y1="795.2" x2="2375.4" y2="813.3" stroke="#a8977f" stroke-width="0.8" opacity="0.85"/>
<polygon points="-722.0,795.2 -381.4,795.2 -439.0,813.6 -779.5,813.6" fill="#c9baa5"/>
<line x1="-722.0" y1="795.2" x2="-779.5" y2="813.3" stroke="#a8977f" stroke-width="0.8" opacity="0.85"/>
<polygon points="2009.2,795.2 2474.5,795.2 2517.0,813.6 2051.7,813.6" fill="#bfaf9a"/>
<line x1="2009.2" y1="795.2" x2="2051.7" y2="813.3" stroke="#a8977f" stroke-width="0.8" opacity="0.85"/>
<polygon points="3331.3,795.2 3548.5,795.2 3639.4,813.6 3422.1,813.6" fill="#c3b39e"/>
<line x1="3331.3" y1="795.2" x2="3422.1" y2="813.3" stroke="#a8977f" stroke-width="0.8" opacity="0.85"/>
<polygon points="-759.0,795.2 -278.3,795.2 -337.2,813.6 -817.9,813.6" fill="#c0b09b"/>
<line x1="-759.0" y1="795.2" x2="-817.9" y2="813.3" stroke="#a8977f" stroke-width="0.8" opacity="0.85"/>
<polygon points="1732.3,795.2 1981.7,795.2 2014.0,813.6 1764.6,813.6" fill="#c5b5a0"/>
<line x1="1732.3" y1="795.2" x2="1764.6" y2="813.3" stroke="#a8977f" stroke-width="0.8" opacity="0.85"/>
<polygon points="-1674.3,795.2 -1217.5,795.2 -1309.9,813.6 -1766.8,813.6" fill="#c0b09b"/>
<line x1="-1674.3" y1="795.2" x2="-1766.8" y2="813.3" stroke="#a8977f" stroke-width="0.8" opacity="0.85"/>
<polygon points="2615.9,795.2 3130.2,795.2 3194.9,813.6 2680.5,813.6" fill="#bdad98"/>
<line x1="2615.9" y1="795.2" x2="2680.5" y2="813.3" stroke="#a8977f" stroke-width="0.8" opacity="0.85"/>
<polygon points="3532.5,795.2 3824.0,795.2 3922.2,813.6 3630.7,813.6" fill="#c3b39e"/>
<line x1="3532.5" y1="795.2" x2="3630.7" y2="813.3" stroke="#a8977f" stroke-width="0.8" opacity="0.85"/>
<polygon points="-2136.5,795.2 -1601.1,795.2 -1710.5,813.6 -2245.8,813.6" fill="#c6b7a1"/>
<line x1="-2136.5" y1="795.2" x2="-2245.8" y2="813.3" stroke="#a8977f" stroke-width="0.8" opacity="0.85"/>
<polygon points="1251.8,795.2 1796.9,795.2 1811.6,813.6 1266.5,813.6" fill="#bdad98"/>
<line x1="1251.8" y1="795.2" x2="1266.5" y2="813.3" stroke="#a8977f" stroke-width="0.8" opacity="0.85"/>
<polygon points="3678.0,795.2 4162.9,795.2 4266.4,813.6 3781.5,813.6" fill="#bdad98"/>
<line x1="3678.0" y1="795.2" x2="3781.5" y2="813.3" stroke="#a8977f" stroke-width="0.8" opacity="0.85"/>
<polygon points="-1026.3,795.2 -652.1,795.2 -720.8,813.6 -1095.0,813.6" fill="#c3b39e"/>
<line x1="-1026.3" y1="795.2" x2="-1095.0" y2="813.3" stroke="#a8977f" stroke-width="0.8" opacity="0.85"/>
<polygon points="3424.1,795.2 3663.7,795.2 3757.9,813.6 3518.3,813.6" fill="#bdad98"/>
<line x1="3424.1" y1="795.2" x2="3518.3" y2="813.3" stroke="#a8977f" stroke-width="0.8" opacity="0.85"/>
<polygon points="449.0,795.2 681.6,795.2 667.0,813.6 434.3,813.6" fill="#c3b39e"/>
<line x1="449.0" y1="795.2" x2="434.3" y2="813.3" stroke="#a8977f" stroke-width="0.8" opacity="0.85"/>
<rect x="0" y="813.3" width="1600" height="19.2" fill="#c3b39e"/>
<line x1="0" y1="813.3" x2="1600" y2="813.3" stroke="#ab9b85" stroke-width="0.7" opacity="0.6"/>
<polygon points="3164.4,813.3 3746.9,813.3 3831.9,832.5 3249.4,832.5" fill="#bdad98"/>
<line x1="3164.4" y1="813.3" x2="3249.4" y2="832.2" stroke="#a8977f" stroke-width="0.8" opacity="0.85"/>
<polygon points="-780.5,813.3 -510.3,813.3 -570.2,832.5 -840.4,832.5" fill="#c0b09b"/>
<line x1="-780.5" y1="813.3" x2="-840.4" y2="832.2" stroke="#a8977f" stroke-width="0.8" opacity="0.85"/>
<polygon points="2416.2,813.3 3003.1,813.3 3060.6,832.5 2473.7,832.5" fill="#bfaf9a"/>
<line x1="2416.2" y1="813.3" x2="2473.7" y2="832.2" stroke="#a8977f" stroke-width="0.8" opacity="0.85"/>
<polygon points="3580.7,813.3 3839.3,813.3 3939.6,832.5 3681.0,832.5" fill="#bfaf9a"/>
<line x1="3580.7" y1="813.3" x2="3681.0" y2="832.2" stroke="#a8977f" stroke-width="0.8" opacity="0.85"/>
<polygon points="-1731.7,813.3 -1465.8,813.3 -1560.7,832.5 -1826.5,832.5" fill="#bfaf9a"/>
<line x1="-1731.7" y1="813.3" x2="-1826.5" y2="832.2" stroke="#a8977f" stroke-width="0.8" opacity="0.85"/>
<polygon points="3237.3,813.3 3567.0,813.3 3654.7,832.5 3324.9,832.5" fill="#bfaf9a"/>
<line x1="3237.3" y1="813.3" x2="3324.9" y2="832.2" stroke="#a8977f" stroke-width="0.8" opacity="0.85"/>
<polygon points="1830.6,813.3 2320.2,813.3 2356.2,832.5 1866.7,832.5" fill="#bfaf9a"/>
<line x1="1830.6" y1="813.3" x2="1866.7" y2="832.2" stroke="#a8977f" stroke-width="0.8" opacity="0.85"/>
<polygon points="-1100.2,813.3 -808.2,813.3 -879.8,832.5 -1171.8,832.5" fill="#c0b09b"/>
<line x1="-1100.2" y1="813.3" x2="-1171.8" y2="832.2" stroke="#a8977f" stroke-width="0.8" opacity="0.85"/>
<polygon points="-2517.2,813.3 -2273.1,813.3 -2396.8,832.5 -2640.9,832.5" fill="#c9baa5"/>
<line x1="-2517.2" y1="813.3" x2="-2640.9" y2="832.2" stroke="#a8977f" stroke-width="0.8" opacity="0.85"/>
<polygon points="1136.0,813.3 1516.6,813.3 1527.1,832.5 1146.5,832.5" fill="#c9baa5"/>
<line x1="1136.0" y1="813.3" x2="1146.5" y2="832.2" stroke="#a8977f" stroke-width="0.8" opacity="0.85"/>
<rect x="0" y="832.2" width="1600" height="19.9" fill="#bfaf9a"/>
<line x1="0" y1="832.2" x2="1600" y2="832.2" stroke="#ab9b85" stroke-width="0.7" opacity="0.6"/>
<polygon points="1860.1,832.2 2400.8,832.2 2438.0,852.1 1897.3,852.1" fill="#c9baa5"/>
<line x1="1860.1" y1="832.2" x2="1897.3" y2="851.8" stroke="#a8977f" stroke-width="0.8" opacity="0.85"/>
<polygon points="2964.6,832.2 3541.5,832.2 3619.4,852.1 3042.5,852.1" fill="#c9baa5"/>
<line x1="2964.6" y1="832.2" x2="3042.5" y2="851.8" stroke="#a8977f" stroke-width="0.8" opacity="0.85"/>
<polygon points="2002.2,832.2 2618.2,832.2 2660.6,852.1 2044.6,852.1" fill="#c0b09b"/>
<line x1="2002.2" y1="832.2" x2="2044.6" y2="851.8" stroke="#a8977f" stroke-width="0.8" opacity="0.85"/>
<polygon points="3252.3,832.2 3550.5,832.2 3639.0,852.1 3340.8,852.1" fill="#c6b7a1"/>
<line x1="3252.3" y1="832.2" x2="3340.8" y2="851.8" stroke="#a8977f" stroke-width="0.8" opacity="0.85"/>
<polygon points="-834.4,832.2 -212.4,832.2 -274.4,852.1 -896.5,852.1" fill="#c9baa5"/>
<line x1="-834.4" y1="832.2" x2="-896.5" y2="851.8" stroke="#a8977f" stroke-width="0.8" opacity="0.85"/>
<polygon points="-894.1,832.2 -347.4,832.2 -411.6,852.1 -958.4,852.1" fill="#c5b5a0"/>
<line x1="-894.1" y1="832.2" x2="-958.4" y2="851.8" stroke="#a8977f" stroke-width="0.8" opacity="0.85"/>
<polygon points="3684.1,832.2 4289.5,832.2 4394.0,852.1 3788.5,852.1" fill="#c0b09b"/>
<line x1="3684.1" y1="832.2" x2="3788.5" y2="851.8" stroke="#a8977f" stroke-width="0.8" opacity="0.85"/>
<polygon points="325.9,832.2 642.2,832.2 622.8,852.1 306.6,852.1" fill="#c3b39e"/>
<line x1="325.9" y1="832.2" x2="306.6" y2="851.8" stroke="#a8977f" stroke-width="0.8" opacity="0.85"/>
<polygon points="-1336.9,832.2 -1016.1,832.2 -1096.7,852.1 -1417.5,852.1" fill="#c9baa5"/>
<line x1="-1336.9" y1="832.2" x2="-1417.5" y2="851.8" stroke="#a8977f" stroke-width="0.8" opacity="0.85"/>
<polygon points="-1854.6,832.2 -1408.7,832.2 -1508.4,852.1 -1954.2,852.1" fill="#bfaf9a"/>
<line x1="-1854.6" y1="832.2" x2="-1954.2" y2="851.8" stroke="#a8977f" stroke-width="0.8" opacity="0.85"/>
<polygon points="3727.8,832.2 4013.9,832.2 4120.0,852.1 3833.8,852.1" fill="#bfaf9a"/>
<line x1="3727.8" y1="832.2" x2="3833.8" y2="851.8" stroke="#a8977f" stroke-width="0.8" opacity="0.85"/>
<polygon points="-2360.6,832.2 -1785.3,832.2 -1903.5,852.1 -2478.9,852.1" fill="#c5b5a0"/>
<line x1="-2360.6" y1="832.2" x2="-2478.9" y2="851.8" stroke="#a8977f" stroke-width="0.8" opacity="0.85"/>
<polygon points="1279.8,832.2 1873.2,832.2 1889.0,852.1 1295.6,852.1" fill="#c0b09b"/>
<line x1="1279.8" y1="832.2" x2="1295.6" y2="851.8" stroke="#a8977f" stroke-width="0.8" opacity="0.85"/>
<polygon points="1862.7,832.2 2240.7,832.2 2278.0,852.1 1900.0,852.1" fill="#bdad98"/>
<line x1="1862.7" y1="832.2" x2="1900.0" y2="851.8" stroke="#a8977f" stroke-width="0.8" opacity="0.85"/>
<polygon points="3891.4,832.2 4435.1,832.2 4547.2,852.1 4003.5,852.1" fill="#c5b5a0"/>
<line x1="3891.4" y1="832.2" x2="4003.5" y2="851.8" stroke="#a8977f" stroke-width="0.8" opacity="0.85"/>
<polygon points="3612.3,832.2 4006.9,832.2 4108.7,852.1 3714.1,852.1" fill="#c3b39e"/>
<line x1="3612.3" y1="832.2" x2="3714.1" y2="851.8" stroke="#a8977f" stroke-width="0.8" opacity="0.85"/>
<polygon points="869.0,832.2 1143.1,832.2 1143.8,852.1 869.7,852.1" fill="#bdad98"/>
<line x1="869.0" y1="832.2" x2="869.7" y2="851.8" stroke="#a8977f" stroke-width="0.8" opacity="0.85"/>
<rect x="0" y="851.8" width="1600" height="20.7" fill="#c9baa5"/>
<line x1="0" y1="851.8" x2="1600" y2="851.8" stroke="#ab9b85" stroke-width="0.7" opacity="0.6"/>
<polygon points="1895.3,851.8 2312.3,851.8 2350.9,872.5 1933.9,872.5" fill="#bdad98"/>
<line x1="1895.3" y1="851.8" x2="1933.9" y2="872.2" stroke="#a8977f" stroke-width="0.8" opacity="0.85"/>
<polygon points="1896.1,851.8 2217.8,851.8 2256.5,872.5 1934.8,872.5" fill="#c5b5a0"/>
<line x1="1896.1" y1="851.8" x2="1934.8" y2="872.2" stroke="#a8977f" stroke-width="0.8" opacity="0.85"/>
<polygon points="-900.6,851.8 -613.3,851.8 -678.0,872.5 -965.3,872.5" fill="#c6b7a1"/>
<line x1="-900.6" y1="851.8" x2="-965.3" y2="872.2" stroke="#a8977f" stroke-width="0.8" opacity="0.85"/>
<polygon points="-952.3,851.8 -397.9,851.8 -464.5,872.5 -1018.9,872.5" fill="#bdad98"/>
<line x1="-952.3" y1="851.8" x2="-1018.9" y2="872.2" stroke="#a8977f" stroke-width="0.8" opacity="0.85"/>
<polygon points="2147.2,851.8 2554.7,851.8 2602.7,872.5 2195.1,872.5" fill="#bfaf9a"/>
<line x1="2147.2" y1="851.8" x2="2195.1" y2="872.2" stroke="#a8977f" stroke-width="0.8" opacity="0.85"/>
<polygon points="3784.5,851.8 4185.8,851.8 4294.3,872.5 3892.9,872.5" fill="#c3b39e"/>
<line x1="3784.5" y1="851.8" x2="3892.9" y2="872.2" stroke="#a8977f" stroke-width="0.8" opacity="0.85"/>
<polygon points="306.6,851.8 836.0,851.8 815.9,872.5 286.6,872.5" fill="#bdad98"/>
<line x1="306.6" y1="851.8" x2="286.6" y2="872.2" stroke="#a8977f" stroke-width="0.8" opacity="0.85"/>
<polygon points="-1414.4,851.8 -1066.1,851.8 -1149.8,872.5 -1498.1,872.5" fill="#bfaf9a"/>
<line x1="-1414.4" y1="851.8" x2="-1498.1" y2="872.2" stroke="#a8977f" stroke-width="0.8" opacity="0.85"/>
<polygon points="-1963.3,851.8 -1413.7,851.8 -1517.6,872.5 -2067.3,872.5" fill="#c3b39e"/>
<line x1="-1963.3" y1="851.8" x2="-2067.3" y2="872.2" stroke="#a8977f" stroke-width="0.8" opacity="0.85"/>
<polygon points="-2483.9,851.8 -2184.1,851.8 -2307.3,872.5 -2607.1,872.5" fill="#c6b7a1"/>
<line x1="-2483.9" y1="851.8" x2="-2607.1" y2="872.2" stroke="#a8977f" stroke-width="0.8" opacity="0.85"/>
<polygon points="1293.7,851.8 1660.7,851.8 1677.1,872.5 1310.1,872.5" fill="#c6b7a1"/>
<line x1="1293.7" y1="851.8" x2="1310.1" y2="872.2" stroke="#a8977f" stroke-width="0.8" opacity="0.85"/>
<polygon points="1906.1,851.8 2341.8,851.8 2380.8,872.5 1945.1,872.5" fill="#c5b5a0"/>
<line x1="1906.1" y1="851.8" x2="1945.1" y2="872.2" stroke="#a8977f" stroke-width="0.8" opacity="0.85"/>
<polygon points="-1247.2,851.8 -635.0,851.8 -712.5,872.5 -1324.7,872.5" fill="#c5b5a0"/>
<line x1="-1247.2" y1="851.8" x2="-1324.7" y2="872.2" stroke="#a8977f" stroke-width="0.8" opacity="0.85"/>
<polygon points="809.0,851.8 1138.5,851.8 1137.0,872.5 807.5,872.5" fill="#bfaf9a"/>
<line x1="809.0" y1="851.8" x2="807.5" y2="872.2" stroke="#a8977f" stroke-width="0.8" opacity="0.85"/>
<rect x="0" y="512" width="1600" height="349" fill="url(#flg)"/>
<polygon points="0,52 1600,52 1600,196 364,202 44,165 0,159" fill="#b9b9b9"/>
<polygon points="0,159 44,165 364,202 1600,196 1600,517 1292,514 924,510 364,519 44,640 0,660" fill="#e3e3e3"/>
<line x1="364" y1="202" x2="1600" y2="196" stroke="#858585" stroke-width="1.3"/>
<line x1="0" y1="159" x2="44" y2="165" stroke="#777" stroke-width="1.5"/>
<line x1="924" y1="510" x2="1294" y2="514" stroke="#707070" stroke-width="1.2"/>
<polygon points="0,52 44,52 44,165 0,159" fill="#e4e5e8"/>
<polygon points="0,161 44,167 44,477 0,489" fill="#f3f4f6"/>
<polygon points="0,489 44,477 44,861 0,861" fill="#dcd6cc"/>
<polygon points="0,489 44,477 44,489 0,501" fill="#a0a0a2"/>
<polygon points="0,501 44,489 44,663 0,680" fill="#abacae"/>
<polygon points="0,545 44,531 44,535 0,549" fill="#a6a7a9"/>
<path d="M4 560 L9 670 M17 556 L21 665 M0 640 L15 628 M33 540 L36 660" stroke="#88898b" stroke-width="1.3" fill="none"/>
<path d="M15 556 q-4 7 0 14 M27 551 q-4 7 0 14" stroke="#77787a" stroke-width="1.8" fill="none"/>
<defs><linearGradient id="brg" x1="0" y1="0" x2="1" y2="0.3"><stop offset="0" stop-color="#72401f"/><stop offset="0.5" stop-color="#83491f"/><stop offset="1" stop-color="#76411f"/></linearGradient></defs>
<polygon points="360,407 480,407 481,418 360,418" fill="#e6dfd0"/>
<line x1="360" y1="407" x2="480" y2="407" stroke="#777" stroke-width="0.8"/>
<rect x="360" y="418" width="122" height="4" fill="#8e8c8a"/>
<polygon points="360,422 482,422 485,510 360,510" fill="#b5b0ab" stroke="#2a2928" stroke-width="0.8"/>
<rect x="360" y="425" width="9" height="83" fill="#c0bcb7" stroke="#2a2928" stroke-width="0.8"/>
<polygon points="368,423 375,423 381,509 374,509" fill="#8f8c89" stroke="#2a2928" stroke-width="0.6"/>
<rect x="374" y="427" width="36" height="22" fill="#c0bcb7" stroke="#2a2928" stroke-width="1"/>
<path d="M385 437.5 q6 2 12 0" fill="none" stroke="#1e1e1e" stroke-width="1.5"/>
<ellipse cx="391" cy="438.3" rx="3.5" ry="1" fill="#8d8d8d"/>
<circle cx="385" cy="437.5" r="1.1" fill="#1e1e1e"/><circle cx="397" cy="437.5" r="1.1" fill="#1e1e1e"/>
<rect x="376" y="450" width="41" height="58" fill="#c0bcb7" stroke="#2a2928" stroke-width="1"/>
<rect x="384.2" y="458.2" width="24.6" height="41.6" fill="#bdb9b4" stroke="#2a2928" stroke-width="0.9"/>
<rect x="387.1" y="461.1" width="18.9" height="35.9" fill="#c1bdb8" stroke="#5a5856" stroke-width="0.7"/>
<path d="M406 453 q-2.2 7.5 0 15" fill="none" stroke="#1e1e1e" stroke-width="1.5"/>
<rect x="404.8" y="455" width="1.6" height="11" rx="0.8" fill="#8d8d8d"/>
<polygon points="446,429 478,429 484,507 454,507" fill="url(#brg)" stroke="#2a2928" stroke-width="0.9"/>
<line x1="451" y1="490" x2="483" y2="490" stroke="#2a2928" stroke-width="0.8"/>
<rect x="360" y="510" width="124" height="9" fill="url(#brg)"/>
<polygon points="469,276 570,276 578,513 481,513" fill="#b5b0ab" stroke="#2a2928" stroke-width="1"/>
<rect x="472" y="280" width="47" height="43" fill="#c0bcb7" stroke="#2a2928" stroke-width="1"/>
<rect x="478.0" y="286.0" width="35.0" height="31.0" fill="#bdb9b4" stroke="#2a2928" stroke-width="0.9"/>
<rect x="481.0" y="289.0" width="28.9" height="24.9" fill="#c1bdb8" stroke="#5a5856" stroke-width="0.7"/>
<path d="M517 298 q-2.2 8.0 0 16" fill="none" stroke="#1e1e1e" stroke-width="1.5"/>
<rect x="515.8" y="300" width="1.6" height="12" rx="0.8" fill="#8d8d8d"/>
<rect x="520" y="280" width="48" height="43" fill="#c0bcb7" stroke="#2a2928" stroke-width="1"/>
<rect x="526.0" y="286.0" width="36.0" height="31.0" fill="#bdb9b4" stroke="#2a2928" stroke-width="0.9"/>
<rect x="529.0" y="289.0" width="29.9" height="24.9" fill="#c1bdb8" stroke="#5a5856" stroke-width="0.7"/>
<path d="M521 298 q-2.2 8.0 0 16" fill="none" stroke="#1e1e1e" stroke-width="1.5"/>
<rect x="519.8" y="300" width="1.6" height="12" rx="0.8" fill="#8d8d8d"/>
<polygon points="481,359 571,359 573,418 486,418" fill="url(#brg)" stroke="#2a2928" stroke-width="1"/>
<line x1="510" y1="359" x2="513" y2="418" stroke="#3a2010" stroke-width="0.8"/>
<rect x="486" y="456" width="91" height="28" fill="#c0bcb7" stroke="#2a2928" stroke-width="1"/>
<path d="M503 469.5 q6 2 12 0" fill="none" stroke="#1e1e1e" stroke-width="1.5"/>
<ellipse cx="509" cy="470.3" rx="3.5" ry="1" fill="#8d8d8d"/>
<circle cx="503" cy="469.5" r="1.1" fill="#1e1e1e"/><circle cx="515" cy="469.5" r="1.1" fill="#1e1e1e"/>
<path d="M547 469.5 q6 2 12 0" fill="none" stroke="#1e1e1e" stroke-width="1.5"/>
<ellipse cx="553" cy="470.3" rx="3.5" ry="1" fill="#8d8d8d"/>
<circle cx="547" cy="469.5" r="1.1" fill="#1e1e1e"/><circle cx="559" cy="469.5" r="1.1" fill="#1e1e1e"/>
<rect x="487" y="484" width="91" height="26" fill="#c0bcb7" stroke="#2a2928" stroke-width="1"/>
<path d="M505 496.5 q6 2 12 0" fill="none" stroke="#1e1e1e" stroke-width="1.5"/>
<ellipse cx="511" cy="497.3" rx="3.5" ry="1" fill="#8d8d8d"/>
<circle cx="505" cy="496.5" r="1.1" fill="#1e1e1e"/><circle cx="517" cy="496.5" r="1.1" fill="#1e1e1e"/>
<path d="M549 496.5 q6 2 12 0" fill="none" stroke="#1e1e1e" stroke-width="1.5"/>
<ellipse cx="555" cy="497.3" rx="3.5" ry="1" fill="#8d8d8d"/>
<circle cx="549" cy="496.5" r="1.1" fill="#1e1e1e"/><circle cx="561" cy="496.5" r="1.1" fill="#1e1e1e"/>
<polygon points="570,276 668,276 673,513 578,513" fill="#b5b0ab" stroke="#2a2928" stroke-width="1"/>
<rect x="571" y="280" width="48" height="43" fill="#c0bcb7" stroke="#2a2928" stroke-width="1"/>
<rect x="577.0" y="286.0" width="36.0" height="31.0" fill="#bdb9b4" stroke="#2a2928" stroke-width="0.9"/>
<rect x="580.0" y="289.0" width="29.9" height="24.9" fill="#c1bdb8" stroke="#5a5856" stroke-width="0.7"/>
<path d="M614 298 q-2.2 8.0 0 16" fill="none" stroke="#1e1e1e" stroke-width="1.5"/>
<rect x="612.8" y="300" width="1.6" height="12" rx="0.8" fill="#8d8d8d"/>
<rect x="620" y="280" width="47" height="43" fill="#c0bcb7" stroke="#2a2928" stroke-width="1"/>
<rect x="626.0" y="286.0" width="35.0" height="31.0" fill="#bdb9b4" stroke="#2a2928" stroke-width="0.9"/>
<rect x="629.0" y="289.0" width="28.9" height="24.9" fill="#c1bdb8" stroke="#5a5856" stroke-width="0.7"/>
<path d="M620 298 q-2.2 8.0 0 16" fill="none" stroke="#1e1e1e" stroke-width="1.5"/>
<rect x="618.8" y="300" width="1.6" height="12" rx="0.8" fill="#8d8d8d"/>
<polygon points="577,329 668,329 670,477 584,477" fill="#87502a" stroke="#2a2928" stroke-width="1"/>
<polygon points="597,329 668,329 669,467 604,467" fill="url(#brg)"/>
<polygon points="584,477 604,467 669,467 670,477" fill="#80492a" stroke="#2a2928" stroke-width="0.6"/>
<line x1="597" y1="329" x2="604" y2="467" stroke="#2a1808" stroke-width="0.9"/>
<rect x="582" y="485" width="91" height="26" fill="#c0bcb7" stroke="#2a2928" stroke-width="1"/>
<path d="M599 497.5 q6 2 12 0" fill="none" stroke="#1e1e1e" stroke-width="1.5"/>
<ellipse cx="605" cy="498.3" rx="3.5" ry="1" fill="#8d8d8d"/>
<circle cx="599" cy="497.5" r="1.1" fill="#1e1e1e"/><circle cx="611" cy="497.5" r="1.1" fill="#1e1e1e"/>
<path d="M641 497.5 q6 2 12 0" fill="none" stroke="#1e1e1e" stroke-width="1.5"/>
<ellipse cx="647" cy="498.3" rx="3.5" ry="1" fill="#8d8d8d"/>
<circle cx="641" cy="497.5" r="1.1" fill="#1e1e1e"/><circle cx="653" cy="497.5" r="1.1" fill="#1e1e1e"/>
<rect x="668" y="276" width="59" height="238" fill="#b5b0ab" stroke="#2a2928" stroke-width="1"/>
<rect x="670" y="280" width="53" height="85" fill="#c0bcb7" stroke="#2a2928" stroke-width="1"/>
<rect x="678.5" y="288.5" width="36.0" height="68.0" fill="#bdb9b4" stroke="#2a2928" stroke-width="0.9"/>
<rect x="682.2" y="292.2" width="28.6" height="60.6" fill="#c1bdb8" stroke="#5a5856" stroke-width="0.7"/>
<path d="M674 318 q-2.2 8.0 0 16" fill="none" stroke="#1e1e1e" stroke-width="1.5"/>
<rect x="672.8" y="320" width="1.6" height="12" rx="0.8" fill="#8d8d8d"/>
<rect x="671" y="367" width="53" height="145" fill="#c0bcb7" stroke="#2a2928" stroke-width="1"/>
<rect x="679.5" y="375.5" width="36.0" height="128.0" fill="#bdb9b4" stroke="#2a2928" stroke-width="0.9"/>
<rect x="683.2" y="379.2" width="28.6" height="120.6" fill="#c1bdb8" stroke="#5a5856" stroke-width="0.7"/>
<path d="M674 372 q-2.2 8.0 0 16" fill="none" stroke="#1e1e1e" stroke-width="1.5"/>
<rect x="672.8" y="374" width="1.6" height="12" rx="0.8" fill="#8d8d8d"/>
<rect x="727" y="277" width="108" height="48" fill="#cfcac5" stroke="#2a2928" stroke-width="1"/>
<rect x="730" y="280" width="101" height="42" fill="url(#lat)"/>
<rect x="725" y="324" width="11" height="94" fill="url(#brg)" stroke="#2a2928" stroke-width="0.6"/>
<polygon points="736,416 850,416 852,418 918,418 925,428 727,428 733,418" fill="url(#brg)" stroke="#2a2928" stroke-width="0.8"/>
<rect x="748" y="422" width="22" height="6" fill="none" stroke="#5a2d10" stroke-width="0.8"/>
<rect x="822" y="423" width="22" height="5" fill="none" stroke="#5a2d10" stroke-width="0.8"/>
<polygon points="865,412 905,412 910,422 866,422" fill="#1f2329" stroke="#888" stroke-width="0.8"/>
<rect x="727" y="428" width="124" height="88" fill="#b5b0ab" stroke="#2a2928" stroke-width="1"/>
<rect x="729" y="431" width="33" height="23" fill="#c0bcb7" stroke="#2a2928" stroke-width="1"/>
<path d="M739 442.0 q6 2 12 0" fill="none" stroke="#1e1e1e" stroke-width="1.5"/>
<ellipse cx="745" cy="442.8" rx="3.5" ry="1" fill="#8d8d8d"/>
<circle cx="739" cy="442.0" r="1.1" fill="#1e1e1e"/><circle cx="751" cy="442.0" r="1.1" fill="#1e1e1e"/>
<rect x="764" y="431" width="50" height="23" fill="#c0bcb7" stroke="#2a2928" stroke-width="1"/>
<rect x="816" y="431" width="33" height="24" fill="#c0bcb7" stroke="#2a2928" stroke-width="1"/>
<path d="M826 442.5 q6 2 12 0" fill="none" stroke="#1e1e1e" stroke-width="1.5"/>
<ellipse cx="832" cy="443.3" rx="3.5" ry="1" fill="#8d8d8d"/>
<circle cx="826" cy="442.5" r="1.1" fill="#1e1e1e"/><circle cx="838" cy="442.5" r="1.1" fill="#1e1e1e"/>
<rect x="730" y="455" width="58" height="59" fill="#c0bcb7" stroke="#2a2928" stroke-width="1"/>
<rect x="736.4" y="461.4" width="45.2" height="46.2" fill="#bdb9b4" stroke="#2a2928" stroke-width="0.9"/>
<rect x="740.4" y="465.4" width="37.1" height="38.1" fill="#c1bdb8" stroke="#5a5856" stroke-width="0.7"/>
<path d="M786 459 q-2.2 8.0 0 16" fill="none" stroke="#1e1e1e" stroke-width="1.5"/>
<rect x="784.8" y="461" width="1.6" height="12" rx="0.8" fill="#8d8d8d"/>
<rect x="790" y="455" width="59" height="60" fill="#c0bcb7" stroke="#2a2928" stroke-width="1"/>
<rect x="796.5" y="461.5" width="46.0" height="47.0" fill="#bdb9b4" stroke="#2a2928" stroke-width="0.9"/>
<rect x="800.6" y="465.6" width="37.8" height="38.8" fill="#c1bdb8" stroke="#5a5856" stroke-width="0.7"/>
<path d="M793 459 q-2.2 8.0 0 16" fill="none" stroke="#1e1e1e" stroke-width="1.5"/>
<rect x="791.8" y="461" width="1.6" height="12" rx="0.8" fill="#8d8d8d"/>
<rect x="852" y="429" width="72" height="88" fill="#b5b0ab" stroke="#2a2928" stroke-width="1"/>
<rect x="854" y="432" width="68" height="24" fill="#c0bcb7" stroke="#2a2928" stroke-width="1"/>
<rect x="854" y="456" width="34" height="60" fill="#c0bcb7" stroke="#2a2928" stroke-width="1"/>
<rect x="859.8" y="461.8" width="22.4" height="48.4" fill="#bdb9b4" stroke="#2a2928" stroke-width="0.9"/>
<rect x="862.2" y="464.2" width="17.7" height="43.7" fill="#c1bdb8" stroke="#5a5856" stroke-width="0.7"/>
<path d="M885 460 q-2.2 8.0 0 16" fill="none" stroke="#1e1e1e" stroke-width="1.5"/>
<rect x="883.8" y="462" width="1.6" height="12" rx="0.8" fill="#8d8d8d"/>
<rect x="888" y="456" width="34" height="60" fill="#c0bcb7" stroke="#2a2928" stroke-width="1"/>
<rect x="893.8" y="461.8" width="22.4" height="48.4" fill="#bdb9b4" stroke="#2a2928" stroke-width="0.9"/>
<rect x="896.2" y="464.2" width="17.7" height="43.7" fill="#c1bdb8" stroke="#5a5856" stroke-width="0.7"/>
<path d="M890 460 q-2.2 8.0 0 16" fill="none" stroke="#1e1e1e" stroke-width="1.5"/>
<rect x="888.8" y="462" width="1.6" height="12" rx="0.8" fill="#8d8d8d"/>
<polygon points="481,510 924,515 922,527 484,522" fill="url(#brg)"/>
<line x1="481" y1="512" x2="922" y2="517" stroke="#5a2d10" stroke-width="0.6"/>
<line x1="578" y1="512" x2="578" y2="525" stroke="#5a2d10" stroke-width="0.8"/>
<line x1="673" y1="512" x2="673" y2="525" stroke="#5a2d10" stroke-width="0.8"/>
<line x1="727" y1="512" x2="727" y2="525" stroke="#5a2d10" stroke-width="0.8"/>
<line x1="852" y1="512" x2="852" y2="525" stroke="#5a2d10" stroke-width="0.8"/>
<polygon points="1302,436 1360,452 1360,540 1292,511" fill="#dedede"/>
<line x1="1302" y1="436" x2="1292" y2="512" stroke="#222" stroke-width="1.3"/>
<line x1="1327" y1="444" x2="1320" y2="524" stroke="#222" stroke-width="1.1"/>
<line x1="1360" y1="478" x2="1353" y2="537" stroke="#333" stroke-width="1"/>
<polygon points="1292,511 1360,538 1360,555 1292,521" fill="#ababab"/>
<polygon points="1292,510 1360,537 1360,543 1292,515" fill="#111"/>
<polygon points="1297,429 1360,427 1360,446 1294,434" fill="#5e4d46"/>
<polygon points="1294,433 1360,446 1360,456 1296,439" fill="#3b2f2a"/>
<path d="M1323 450 q-4 6 0 13 M1329 451 q-4 6 0 13" fill="none" stroke="#1a1a1a" stroke-width="1.5"/>
<line x1="1360" y1="418" x2="1357" y2="428" stroke="#333" stroke-width="1"/>
</svg></div><div id="ui" style="position:absolute;left:0;top:0;width:1600px;height:861px;will-change:transform"><div id="topbar">
  <!-- back + dropdown -->
  <div class="a" style="left:12px;top:12px;width:40px;height:28px;background:#fff;border-radius:3px 0 0 3px"></div>
  <svg class="a" style="left:25px;top:19px" width="14" height="14" viewBox="0 0 14 14"><path d="M13 7H1.8M7 1.5L1.5 7 7 12.5" fill="none" stroke="#26282c" stroke-width="1.6"/></svg>
  <div class="a" style="left:54px;top:12px;width:120px;height:28px;background:#fff;border-radius:0 3px 3px 0"></div>
  <div class="a" style="left:62px;top:18px;font-size:12.8px;color:#707378;white-space:nowrap">Kitchen &amp; Bath</div>
  <div class="car" style="left:156px;top:24px;border-top-color:#9c9ea2"></div>

  <!-- File -->
  <svg class="a" style="left:441px;top:9px" width="14" height="18" viewBox="0 0 16 19" preserveAspectRatio="none"><path d="M2 0h9l4 4v13a2 2 0 0 1-2 2H2a2 2 0 0 1-2-2V2a2 2 0 0 1 2-2z" fill="#55585e"/><path d="M11 0.8v3.4h3.4" fill="#fff" stroke="#fff" stroke-width="0.6"/><path d="M4 10.5L8 7l4 3.5V15H9.6v-2.5H6.4V15H4z" fill="#fff"/></svg>
  <div class="tb" style="left:448px"><span class="tl" style="left:0">File</span></div>
  <div class="car" style="left:463px;top:24px"></div>
  <!-- Save -->
  <svg class="a" style="left:491px;top:10px" width="16" height="16" viewBox="0 0 16 16"><path d="M1.2 0h11.3L16 3.5v11.3a1.2 1.2 0 0 1-1.2 1.2H1.2A1.2 1.2 0 0 1 0 14.8V1.2A1.2 1.2 0 0 1 1.2 0z" fill="#55585e"/><rect x="10" y="2" width="2.4" height="3" fill="#ebecee"/><rect x="2.5" y="9" width="10.5" height="4" fill="#ebecee"/></svg>
  <div class="tb" style="left:499px"><span class="tl" style="left:0">Save</span></div>
  <!-- Undo -->
  <svg class="a" style="left:536px;top:11px" width="19" height="16" viewBox="0 0 19 16"><path d="M7 0L0 6l7 6V8.3c5 0 8.5 1.5 10.5 7.5C17 9 13.5 4 7 3.6z" fill="#55585e"/></svg>
  <div class="tb" style="left:545px"><span class="tl" style="left:0">Undo</span></div>
  <!-- Redo -->
  <svg class="a" style="left:583px;top:11px" width="19" height="16" viewBox="0 0 19 16"><path d="M12 0l7 6-7 6V8.3c-5 0-8.5 1.5-10.5 7.5C2 9 5.5 4 12 3.6z" fill="#c3c5c9"/></svg>
  <div class="tb" style="left:592px;color:#b9bbbf"><span class="tl" style="left:0">Redo</span></div>
  <!-- Clear -->
  <svg class="a" style="left:630px;top:8px" width="20" height="20" viewBox="0 0 20 20"><path d="M11.1 1.1L18 7.2l-7.5 8.3L4 9.6z" fill="#55585e"/><path d="M4.8 10.3L2.2 13.6l3.3 3.3h5" fill="none" stroke="#55585e" stroke-width="1.6" stroke-linejoin="round"/><rect x="5.5" y="16.3" width="11.5" height="1.8" fill="#55585e"/></svg>
  <div class="tb" style="left:638px"><span class="tl" style="left:0">Clear</span></div>
  <div class="car" style="left:657px;top:24px"></div>
  <div class="a" style="left:677px;top:7px;width:1px;height:35px;background:#d9dadd"></div>
  <!-- Toolkit -->
  <svg class="a" style="left:700px;top:8px" width="19" height="19" viewBox="0 0 19 19"><path d="M2.6 16.4L10.5 8.5" stroke="#55585e" stroke-width="3.3" stroke-linecap="round"/><circle cx="12.3" cy="6.7" r="5.5" fill="#55585e"/><path d="M12.6 6.4L16.5 2.5" stroke="#ebecee" stroke-width="3.6" stroke-linecap="round"/><circle cx="2.6" cy="16.4" r="0.9" fill="#ebecee"/></svg>
  <div class="tb" style="left:709px"><span class="tl" style="left:0">Toolkit</span></div>
  <div class="car" style="left:732px;top:24px"></div>
  <!-- Furniture Plan -->
  <svg class="a" style="left:783px;top:11px" width="19" height="14" viewBox="0 0 19 14"><rect x="0.4" y="0.1" width="8.6" height="8.3" fill="#a3a5a8"/><path d="M0.4 1.5h8.6M0.4 3.5h8.6M0.4 5.5h8.6M0.4 7.5h8.6" stroke="#95979b" stroke-width="0.6"/><rect x="0.4" y="9.5" width="8.6" height="4.1" rx="0.8" fill="#55585e"/><path d="M10.9 0.1H17a1.4 1.4 0 0 1 1.4 1.4V6.9H14l-1.4 3H18.4v2.3a1.4 1.4 0 0 1-1.4 1.4H10.9z" fill="#55585e"/></svg>
  <div class="tb" style="left:792px"><span class="tl" style="left:0">Furniture Plan</span></div>
  <!-- AI Templates -->
  <svg class="a" style="left:873px;top:9px" width="19" height="19" viewBox="0 0 19 19"><path d="M11.2 0.4L5.4 5.7h5.8z" fill="#55585e"/><path d="M4.3 7.1H18l-3.3 3.8H0.4z" fill="#55585e"/><path d="M7.6 12.2h5.7L8 18z" fill="#55585e"/></svg>
  <div class="tb" style="left:882px"><span class="tl" style="left:0">AI Templates</span></div>
  <div class="car" style="left:921px;top:24px"></div>
  <div class="a" style="left:941px;top:7px;width:1px;height:35px;background:#d9dadd"></div>
  <!-- Render -->
  <svg class="a" style="left:965px;top:10px" width="18" height="15" viewBox="0 0 18 15"><path d="M5.5 0h7l1.3 2H16a2 2 0 0 1 2 2v9a2 2 0 0 1-2 2H2a2 2 0 0 1-2-2V4a2 2 0 0 1 2-2h2.2z" fill="#55585e"/><circle cx="9" cy="8.3" r="4.6" fill="#f3f3f5"/><circle cx="9" cy="8.3" r="3.6" fill="#7b6ee8"/><path d="M9 4.7a3.6 3.6 0 0 1 3.6 3.6H9z" fill="#ff5d8f"/><path d="M5.4 8.3A3.6 3.6 0 0 1 9 4.7v3.6z" fill="#f24b6b"/><path d="M9 11.9a3.6 3.6 0 0 1-3.6-3.6H9z" fill="#3fb6ff"/><circle cx="9" cy="8.3" r="1.6" fill="#fff"/></svg>
  <div class="tb" style="left:973px"><span class="tl" style="left:0">Render</span></div>
  <!-- Gallery -->
  <svg class="a" style="left:1021px;top:10px" width="18" height="16" viewBox="0 0 18 16"><rect x="2" y="0" width="14" height="1.2" fill="#8d9095"/><rect x="0" y="2" width="18" height="14" rx="1.5" fill="#55585e"/><path d="M2 13.5l4.5-5 3.5 3 2.5-2 3.5 4z" fill="#fff"/><circle cx="13.5" cy="5.5" r="1.4" fill="#fff"/></svg>
  <div class="tb" style="left:1030px"><span class="tl" style="left:0">Gallery</span></div>
  <!-- Drawings -->
  <svg class="a" style="left:1101px;top:9px" width="16" height="18" viewBox="0 0 16 18"><path d="M2 16.5V3" stroke="#8d9095" stroke-width="1.2"/><path d="M2.6 17.4h12" stroke="#8d9095" stroke-width="1.2"/><path d="M1.5 0H10l3.5 3.5v11.5a1 1 0 0 1-1 1h-11a1 1 0 0 1-1-1V1a1 1 0 0 1 1-1z" fill="#55585e"/><path d="M10 0.6v3h3" fill="#fff"/></svg>
  <div class="a" style="left:1115px;top:4px;width:9px;height:9px;border-radius:50%;background:#f5141b"></div>
  <div class="tb" style="left:1108px"><span class="tl" style="left:0">Drawings &amp; S...</span></div>
  <div class="car" style="left:1155px;top:24px"></div>
  <!-- Help -->
  <svg class="a" style="left:1503px;top:9px" width="16" height="16" viewBox="0 0 16 16"><circle cx="8" cy="8" r="8" fill="#55585e"/><path d="M5.6 6.1a2.4 2.4 0 1 1 3.4 2.1c-.7.4-1 .8-1 1.5v.4" fill="none" stroke="#fff" stroke-width="1.6"/><circle cx="8" cy="12.3" r="1" fill="#fff"/></svg>
  <div class="tb" style="left:1511px"><span class="tl" style="left:0;top:28px">Help</span></div>
  <div class="car" style="left:1530px;top:24px"></div>
  <!-- avatar -->
  <div class="a" style="left:1555px;top:12px;width:28px;height:28px;border-radius:50%;background:#e1e8f6;overflow:hidden">
    <div class="a" style="left:9px;top:5px;width:10px;height:10px;border-radius:50%;background:#a3bcf6"></div>
    <div class="a" style="left:4px;top:16px;width:20px;height:14px;border-radius:10px 10px 4px 4px;background:#a3bcf6"></div>
  </div>
</div>
<div id="rail">
  <div class="a" style="left:0;top:50px;width:44px;height:44px;background:rgba(222,223,226,0.9)"></div>
  <!-- sofa -->
  <svg class="a" style="left:10px;top:11.5px" width="24" height="22" viewBox="0 0 24 22"><path d="M6.5 0.5h11c1.5 0 2.3.8 2.8 2L23 9.5V15H1V9.5l2.7-7c.5-1.2 1.3-2 2.8-2z" fill="#a5a7aa"/><path d="M0.5 10a2.5 2.5 0 0 1 5 0v7h13v-7a2.5 2.5 0 0 1 5 0v7.5c0 2.5-1.8 4.5-4.5 4.5h-14C2.3 22 .5 20 .5 17.5z" fill="#5f6368"/><path d="M6.5 10.5h11l1.5 6H5z" fill="#d8d9db"/></svg>
  <!-- crown -->
  <svg class="a" style="left:10.5px;top:60px" width="22" height="22" viewBox="0 0 22 22"><path d="M1 4.5c0-.8 1-1.2 1.5-.6L6.5 8 10 1.2c.4-.8 1.6-.8 2 0L15.5 8l4-4.1c.5-.6 1.5-.2 1.5.6V15H1z" fill="#6ea8f8"/><path d="M1 14.5h20v4.5c0 1.5-4.5 2.5-10 2.5S1 20.5 1 19z" fill="#1f74f0"/><path d="M8.2 8.8l2.8 5 2.8-5" fill="none" stroke="#cfe0fb" stroke-width="1.6"/></svg>
  <!-- badge -->
  <svg class="a" style="left:11.5px;top:110px" width="20" height="25" viewBox="0 0 20 25"><path d="M3.5 15.5L0.5 22.5l3.5-.8 2 3 3-6.2z M16.5 15.5l3 7-3.5-.8-2 3-3-6.2z" fill="#55585e"/><path d="M10 0.5l9 5.2v10.6L10 21.5 1 16.3V5.7z" fill="#a3a5a8"/><path d="M6.8 7.8l3.2 6 3.2-6" fill="none" stroke="#e4e5e7" stroke-width="1.7"/></svg>
  <!-- person -->
  <svg class="a" style="left:11px;top:160px" width="21" height="24" viewBox="0 0 21 24"><circle cx="11" cy="6" r="6" fill="#55585e"/><circle cx="9.5" cy="6" r="5.5" fill="#a0a2a5"/><path d="M0.5 23.5c0-6 3.5-10 10-10s10 4 10 10z" fill="#55585e"/><path d="M0.5 23.5c0-6 3-10 8.5-10 3 0 5 1.5 6 3.5-1.5 2-2 4-2 6.5z" fill="#a0a2a5"/></svg>
  <!-- cabinet -->
  <svg class="a" style="left:12px;top:210px" width="20" height="22" viewBox="0 0 20 22"><rect x="0" y="0" width="20" height="5" rx="1" fill="#55585e"/><rect x="0.5" y="5" width="19" height="15" fill="#9fa2a6"/><rect x="3" y="9" width="14" height="1.2" fill="#55585e"/><rect x="3" y="14" width="14" height="1.2" fill="#55585e"/><rect x="8.5" y="7" width="3" height="1" fill="#55585e"/><rect x="8.5" y="12" width="3" height="1" fill="#55585e"/><circle cx="3" cy="20.5" r="1.5" fill="#55585e"/><circle cx="17" cy="20.5" r="1.5" fill="#55585e"/></svg>
  <!-- bottom icon -->
  <svg class="a" style="left:11px;top:765px" width="20" height="21" viewBox="0 0 20 21"><rect x="0" y="0" width="20" height="21" rx="2" fill="#5f6368"/><rect x="3" y="3" width="14" height="2.5" fill="#c9cacd"/><rect x="3" y="8" width="6" height="5" fill="#c9cacd"/><rect x="11" y="8" width="6" height="5" fill="#c9cacd"/><rect x="3" y="15.5" width="14" height="2.5" fill="#c9cacd"/></svg>
</div>

<div id="cat">
  <div class="a" style="left:12px;top:17.5px;font-size:17px;font-weight:700;color:#262a33;white-space:nowrap">Main Product Catalog</div>
  <!-- search -->
  <svg class="a" style="left:230px;top:20px" width="20" height="20" viewBox="0 0 20 20"><circle cx="8" cy="8" r="6.3" fill="none" stroke="#86898d" stroke-width="2"/><path d="M12.5 12.5L17.8 17.8" stroke="#86898d" stroke-width="2.1"/></svg>
  <svg class="a" style="left:262.5px;top:22px" width="16" height="15" viewBox="0 0 16 15"><rect x="0.4" y="1.2" width="14" height="2.3" fill="#86898d"/><rect x="0.4" y="7.5" width="8" height="2.3" fill="#86898d"/><rect x="0.4" y="13.7" width="14" height="2.3" fill="#86898d" transform="translate(0 -1)"/><path d="M11 5.7l3.5 2.9-3.5 2.9z" fill="#86898d"/></svg>
  <svg class="a" style="left:290px;top:21px" width="16" height="16" viewBox="0 0 16 16"><path d="M8.5 3.5v4h4z" fill="#86898d"/><path d="M9.5 6.5L14.5 1.5" stroke="#86898d" stroke-width="1.8"/><path d="M7 12.5v-4H3z" fill="#86898d"/><path d="M6 9.5L1.5 14" stroke="#86898d" stroke-width="1.8"/></svg>
  <div class="a" style="left:0;top:54px;width:320px;height:1px;background:#eceef0"></div>
  <div class="a" style="left:88px;top:55px;width:1px;height:745px;background:#eceef0"></div>

  <!-- category column -->
  <div class="a" style="left:0;top:118px;width:88px;height:1px;background:#eceef0"></div>
  <svg class="a" style="left:39px;top:112px" width="12" height="7" viewBox="0 0 12 7"><path d="M0 7L6 1l6 6" fill="#fff" stroke="#eceef0" stroke-width="1"/></svg>
  <svg class="a" style="left:35px;top:67px" width="18" height="18" viewBox="0 0 18 18"><path d="M1.5 17.5V1h15v16.5M1.5 13.5h15" fill="none" stroke="#1b6ff2" stroke-width="2.1"/><rect x="5" y="4.5" width="8" height="1.9" fill="#1b6ff2"/><rect x="5" y="8.3" width="8" height="1.9" fill="#1b6ff2"/></svg>
  <div class="cc" style="top:88px;color:#1b6ff2;font-weight:700;font-size:12.8px">Product Ca...</div>
  <div class="cc" style="top:130px;color:#1b6ff2;font-weight:700;font-size:12.5px;line-height:18px">7[Kitchen<br>Appliances]</div>
  <div class="cc" style="top:188px">6[Accessories<br>]</div>
  <div class="cc" style="top:246px">3[Tall cabinet]</div>
  <div class="cc" style="top:286px">2[Wall<br>Cabinet]</div>
  <div class="cc" style="top:344px">1[Base<br>Cabinet]</div>
  <div class="cc" style="top:402px">4[Mid-height<br>cabinet]</div>
  <div class="cc" style="top:460px">5[Countertop<br>Cabinet]</div>
  <!-- parts -->
  <svg class="a" style="left:35px;top:519px" width="18" height="18" viewBox="0 0 18 18"><rect x="1" y="1" width="16" height="16" fill="none" stroke="#26282c" stroke-width="2" stroke-dasharray="3.2 2.2"/><rect x="6" y="5" width="6" height="8" fill="#26282c"/></svg>
  <div class="cc" style="top:541px">Parts</div>
  <svg class="a" style="left:35px;top:584px" width="18" height="18" viewBox="0 0 18 18"><rect x="1" y="1" width="16" height="5.8" fill="none" stroke="#26282c" stroke-width="1.9"/><rect x="8.1" y="1" width="1.8" height="5.8" fill="#26282c"/><rect x="1" y="9.5" width="16" height="7.5" fill="none" stroke="#26282c" stroke-width="1.9"/><rect x="5.8" y="9.5" width="1.7" height="7.5" fill="#26282c"/><rect x="10.5" y="9.5" width="1.7" height="7.5" fill="#26282c"/></svg>
  <div class="cc" style="top:606px;font-size:13px">Combinations</div>
  <svg class="a" style="left:35px;top:649px" width="18" height="18" viewBox="0 0 18 18"><rect x="1" y="1" width="16" height="16" fill="none" stroke="#26282c" stroke-width="2"/><rect x="4.5" y="4.5" width="4.5" height="4.5" fill="#26282c"/><rect x="9" y="9" width="4.5" height="4.5" fill="#26282c"/></svg>
  <div class="cc" style="top:671px">Materials</div>
  <svg class="a" style="left:37px;top:715px" width="14" height="15" viewBox="0 0 14 15"><path d="M4.5 12.5H1V1h7v4.5" fill="none" stroke="#26282c" stroke-width="1.7"/><rect x="4.5" y="5.5" width="8.5" height="8.5" rx="0.5" fill="none" stroke="#26282c" stroke-width="1.7"/></svg>
  <div class="cc" style="top:736px">Hybrid libra...</div>

  <!-- content -->
  <div class="sh" style="top:74px">2[Built-in Appliances]</div>
  <div class="card" style="left:100px;top:100px;height:138px">
    <div class="img" style="background:linear-gradient(#d8d8d8,#e2e2e2)">
      <svg width="90" height="90" viewBox="0 0 90 90"><path d="M30 78l48-10 3 6-47 10z" fill="#ececec" opacity="0.8"/><path d="M16.7 25.6L28.8 42.4 30.7 76.7 18.6 63.7z" fill="#ececec"/><path d="M28.8 42.4L79.9 33 78 66.5 30.7 76.7z" fill="#f2f2f2"/><path d="M29.3 45.5L79.6 36 77.8 65.6 30.4 75.6z" fill="#3c3e41"/><path d="M29.5 48.5L73.5 40" stroke="#1e1f21" stroke-width="1.2"/><path d="M30.7 76.7L78 66.5l.4 2.8-46.8 10.2z" fill="#fafafa"/><path d="M16.7 23.8L65.9 12.6 79.9 33 28.8 42.4z" fill="#f4f4f4"/><path d="M16 22.5L65.5 11l.8 3.4L16.7 25.6z" fill="#45484b"/><path d="M19.5 27.5L40 22.5 44 38.5 29 41z" fill="#b8ced2"/><path d="M42 21L73.4 15l4.6 14.3L44 37.7z" fill="#c9c9c9"/><path d="M44 27l30-6" stroke="#b0b0b0" stroke-width="0.8"/><rect x="39.5" y="13" width="3" height="8" fill="#f0f0f0"/><circle cx="41" cy="13.5" r="1.8" fill="#e8e8e8"/></svg>
    </div>
    <div class="lbl" style="top:108px">Integrated sink</div>
  </div>
  <div class="card" style="left:209px;top:100px;height:138px">
    <div class="img" style="background:radial-gradient(circle at 50% 65%,#96999c,#84878a)">
      <svg width="90" height="90" viewBox="0 0 90 90"><ellipse cx="50" cy="80" rx="30" ry="5" fill="#6f7275" opacity="0.6"/><path d="M18.2 14.5L60 12.6l.8 11L19.3 36.8z" fill="#0d0d0d"/><path d="M18.2 14.5L60 12.6v1.2L18.3 15.8z" fill="#dcdcdc"/><path d="M20 36l40-15 13 16.7L28.4 46z" fill="#1c1c1c"/><path d="M24 38l12-3 3 4-11 3z M45 33l10-2 3 4-10 2z" fill="#3a3a3a"/><path d="M28.4 46L73 37.7l-1 6.3-43 7.6z" fill="#0f0f0f"/><path d="M20 36l8.4 10 .9 33.5L21 73z" fill="#c4c4c4"/><path d="M29 51.6L72 44l-1.8 29-40.9 6.5z" fill="#d9d9d9"/><path d="M38.4 58l23-2.6v13L38.4 71z" fill="#a89373" stroke="#6d6d6d" stroke-width="0.8"/><path d="M31 55l39-6.5" stroke="#9a9a9a" stroke-width="1"/><circle cx="38" cy="48.5" r="0.9" fill="#fff"/><circle cx="55" cy="45.5" r="0.9" fill="#fff"/></svg>
    </div>
    <div class="lbl" style="top:98px;line-height:18px">Integrated<br>stove</div>
  </div>

  <div class="sh" style="top:262px">1[Range Hood]</div>
  <div class="card" style="left:100px;top:288px;height:138px">
    <div class="img" style="background:linear-gradient(#dadada,#e4e4e4)">
      <svg width="90" height="90" viewBox="0 0 90 90"><path d="M26 76l60-15v6L28 82z" fill="#dcdcdc" opacity="0.7"/><path d="M12 49.1L69.5 35.2 85.7 57.3 25.9 72.4z" fill="#a9a9a9"/><path d="M25.9 72.4L85.7 57.3v2.6L25.9 75.4z" fill="#2b2b2b"/><path d="M12 49.1l13.9 23.3v3L12 51.8z" fill="#8e8e8e"/><path d="M30 13.7L52 9.1l7.6 11-23.8 6.4z" fill="#bdbdbd"/><path d="M30 13.7l5.8 12.8.6 29L30.5 46z" fill="#a5a5a5"/><path d="M35.8 26.5l23.8-6.4-.6 32-22.6 3.4z" fill="#b2b2b2"/></svg>
    </div>
    <div class="lbl" style="top:107.5px">Show All</div>
  </div>

  <div class="sh" style="top:450px">3[Refrigerator]</div>
  <div class="card" style="left:100px;top:476px;height:138px">
    <div class="img" style="background:linear-gradient(#d9d9d9,#e3e3e3)">
      <svg width="90" height="90" viewBox="0 0 90 90"><ellipse cx="48" cy="82" rx="22" ry="4" fill="#c9c9c9" opacity="0.8"/><path d="M25 10l10-5v79l-8-4z" fill="#cfcfcf"/><path d="M35 5l27-3 2 77-29 5z" fill="#e6e6e6"/><path d="M25 10l24-8h13L35 5z" fill="#f0f0f0"/><path d="M40 5v78M45 4.5v78M50 4v77M55 3.5v76.5M59 3v76" stroke="#d6d6d6" stroke-width="0.9"/><path d="M35 53l28-4" stroke="#a8a8a8" stroke-width="0.9"/><path d="M36.5 42v14" stroke="#9a9a9a" stroke-width="1.2"/></svg>
    </div>
    <div class="lbl" style="top:107.5px">Show All</div>
  </div>

  <div class="a" style="left:99px;top:639px;width:210px;height:54px;background:#f6f6f6;border-radius:3px">
    <div class="a" style="left:12px;top:19px;font-size:12.8px;color:#45484d;white-space:nowrap">All 7[Kitchen Appliances]</div>
    <div class="a" style="left:159px;top:3px;width:48px;height:48px;background:#fff;border-radius:2px"></div>
    <svg class="a" style="left:169px;top:14px" width="28" height="25" viewBox="0 0 28 25"><path d="M0 2a2 2 0 0 1 2-2h8l2 3h14a2 2 0 0 1 2 2v18a2 2 0 0 1-2 2H2a2 2 0 0 1-2-2z" fill="#bcc3cf"/><rect x="0" y="5" width="28" height="20" rx="1.5" fill="#a6afbd"/><rect x="4" y="10" width="9" height="2" fill="#e9edf2"/><rect x="4" y="15" width="6" height="2" fill="#e9edf2"/><path d="M18 5h6v17l-3-3-3 3z" fill="#7d8799"/></svg>
  </div>
</div>
<!-- minimap panel -->
<div class="a" style="left:1360px;top:52px;width:240px;height:208px;border-radius:7px 0 0 7px;overflow:hidden;background-color:#f3f4f6;background-image:linear-gradient(90deg,#e4e5e8 1px,transparent 1px),linear-gradient(#e4e5e8 1px,transparent 1px);background-size:10px 10px;background-position:9px 7px">
  <div class="a" style="left:20px;top:0;width:110px;height:27px;background:#fff"></div>
  <div class="a" style="left:130px;top:0;width:110px;height:27px;background:#f5f6f8"></div>
  <svg class="a" style="left:10px;top:8px" width="6" height="12" viewBox="0 0 6 12"><g fill="#8d9095"><rect x="0" y="0" width="1.6" height="1.6"/><rect x="3.4" y="0" width="1.6" height="1.6"/><rect x="0" y="3.3" width="1.6" height="1.6"/><rect x="3.4" y="3.3" width="1.6" height="1.6"/><rect x="0" y="6.6" width="1.6" height="1.6"/><rect x="3.4" y="6.6" width="1.6" height="1.6"/><rect x="0" y="9.9" width="1.6" height="1.6"/><rect x="3.4" y="9.9" width="1.6" height="1.6"/></g></svg>
  <div class="a" style="left:20px;top:7.5px;width:110px;text-align:center;font-size:12.5px;font-weight:700;color:#1b6ff2">View</div>
  <div class="a" style="left:130px;top:7.5px;width:110px;text-align:center;font-size:12.5px;font-weight:700;color:#33363c">Select Room</div>
  <!-- plan -->
  <svg class="a" style="left:0;top:0" width="240" height="208" viewBox="1360 52 240 208">
    <rect x="1379" y="93.5" width="202" height="126" fill="#6e6e6e"/>
    <rect x="1384.5" y="99" width="191" height="115" fill="#cbb798"/>
    <g opacity="0.35" stroke="#b59f80" stroke-width="0.8">
      <line x1="1397" y1="118" x2="1575" y2="118"/><line x1="1397" y1="135" x2="1575" y2="135"/><line x1="1397" y1="152" x2="1575" y2="152"/><line x1="1397" y1="170" x2="1575" y2="170"/><line x1="1397" y1="188" x2="1575" y2="188"/><line x1="1397" y1="205" x2="1575" y2="205"/>
    </g>
    <rect x="1385" y="99" width="37" height="13" fill="#e6ddcb"/>
    <rect x="1385" y="99" width="12" height="25" fill="#e6ddcb"/>
    <rect x="1422" y="99" width="76" height="11.5" fill="#8f4b1f"/>
    <line x1="1438" y1="99" x2="1438" y2="110" stroke="#3a2010" stroke-width="0.8"/>
    <rect x="1490" y="101" width="7" height="9" fill="#1a1d22"/>
    <rect x="1385" y="140" width="12" height="73" fill="#7d8576"/>
    <line x1="1385" y1="171" x2="1397" y2="171" stroke="#555" stroke-width="0.8"/>
    <rect x="1564" y="101" width="10" height="41" fill="#7b6e68"/>
    <rect x="1566" y="118" width="6" height="13" fill="#e8e8e8"/>
    <rect x="1384" y="98" width="192" height="116" fill="none" stroke="#3c3c3c" stroke-width="0.8"/>
    <line x1="1481" y1="172" x2="1483" y2="222" stroke="#222" stroke-width="1.6" stroke-dasharray="2.5 2"/>
    <path d="M1477 226h13l-2 4.5h-9z" fill="#4a4d52"/>
    <rect x="1476.5" y="232" width="17" height="12" rx="1.5" fill="#4a4d52"/>
    <g font-family="Liberation Sans" font-weight="700" text-anchor="middle" fill="#2b2d31" stroke="#fff" stroke-width="2.6" paint-order="stroke" stroke-linejoin="round">
      <text x="1480" y="105" font-size="11.5">378"</text>
      <text x="1480" y="216" font-size="11.5">378"</text>
      <text x="1480" y="153" font-size="12.5">Untitled</text>
      <text x="1480" y="167.5" font-size="12.5">85898in²</text>
      <text transform="translate(1382 156) rotate(90)" font-size="11.5">227"</text>
      <text transform="translate(1578 156) rotate(-90)" font-size="11.5">227"</text>
    </g>
    <path d="M1363 247l10 10M1363 252l5 5" stroke="#b9bbbe" stroke-width="1"/>
  </svg>
</div>
<div class="a" style="left:1360px;top:260px;width:240px;height:8px;background:transparent"></div>

<!-- Level panel -->
<div class="a" style="left:1360px;top:268px;width:240px;height:584px;background:#fff;border-radius:7px 0 0 7px;overflow:hidden">
  <div class="a" style="left:0;top:0;width:240px;height:32px;background:#f6f6f7"></div>
  <svg class="a" style="left:10px;top:10px" width="6" height="15" viewBox="0 0 6 15"><g fill="#8d9095"><rect x="0" y="0" width="1.6" height="1.6"/><rect x="3.4" y="0" width="1.6" height="1.6"/><rect x="0" y="3.3" width="1.6" height="1.6"/><rect x="3.4" y="3.3" width="1.6" height="1.6"/><rect x="0" y="6.6" width="1.6" height="1.6"/><rect x="3.4" y="6.6" width="1.6" height="1.6"/><rect x="0" y="9.9" width="1.6" height="1.6"/><rect x="3.4" y="9.9" width="1.6" height="1.6"/><rect x="0" y="13.2" width="1.6" height="1.6"/><rect x="3.4" y="13.2" width="1.6" height="1.6"/></g></svg>
  <div class="a" style="left:20px;top:8px;font-size:14.5px;font-weight:700;color:#45484d">Level</div>
  <svg class="a" style="left:222px;top:9px" width="10" height="10" viewBox="0 0 10 10"><path d="M6 1h3v3M9 1L6 4M4 9H1V6M1 9l3-3" fill="none" stroke="#a3a5a9" stroke-width="1"/></svg>
  <div class="a" style="left:12px;top:42px;font-size:13px;font-weight:700;color:#33363c">Properties</div>
  <svg class="a" style="left:215px;top:46px" width="12" height="7" viewBox="0 0 12 7"><path d="M1 6.2L6 1.2l5 5" fill="none" stroke="#55585e" stroke-width="1.4"/></svg>
  <div class="lp" style="top:80.5px">Add Level</div>
  <div class="a" style="left:122px;top:73px;width:48px;height:27px;background:#f3f3f4;border-radius:2px"></div>
  <div class="a" style="left:180px;top:73px;width:48px;height:27px;background:#f3f3f4;border-radius:2px"></div>
  <svg class="a" style="left:136px;top:77px" width="20" height="18" viewBox="0 0 20 18"><path d="M10.8 2.5L2.8 7l7.2 4.2" fill="none" stroke="#5f6368" stroke-width="1.8" stroke-linejoin="round"/><path d="M2 11.7l8-4 7.8 4-7.8 4.8z" fill="#5f6368"/><path d="M16 2.2v5.6M13.2 5h5.6" stroke="#5f6368" stroke-width="1.7"/></svg>
  <svg class="a" style="left:194px;top:77px" width="20" height="18" viewBox="0 0 20 18"><path d="M2.2 6.9l7.9-4.4L18 6.9l-7.9 4.8z" fill="#5f6368"/><path d="M5.5 9.6L2.4 11.7l7.6 4.5 2-1.1" fill="none" stroke="#5f6368" stroke-width="1.8" stroke-linejoin="round"/><path d="M16.2 11.1v5.6M13.4 13.9h5.6" stroke="#5f6368" stroke-width="1.7"/></svg>
  <div class="lp" style="top:116px">Current Floor</div>
  <div class="a" style="left:123px;top:111px;width:105px;height:23px;border:1px solid #f0f0f1;border-radius:2px"></div>
  <div class="a" style="left:133px;top:116px;font-size:12px;color:#c3c5c8">Level 1</div>
  <div class="a" style="left:217px;top:124px;width:4px;height:1px;background:#ccc"></div>
  <div class="lp" style="top:150px">Area</div>
  <div class="inp" style="top:145px"></div>
  <div class="a" style="left:156px;top:150px;font-size:12.5px;color:#33363c">85898</div>
  <div class="a" style="left:203px;top:150px;font-size:12.5px;color:#6b6e73">in²</div>
  <div class="lp" style="top:187px">Height</div>
  <div class="inp" style="top:182px"></div>
  <div class="a" style="left:156px;top:187px;font-size:12.5px;color:#33363c">110"</div>
  <div class="a" style="left:208px;top:187px;font-size:12.5px;color:#6b6e73">in</div>
  <div class="lp" style="top:214px">Floor thickness</div>
  <div class="a" style="left:14px;top:239px;width:118px;height:2px;background:#e7e8ea"></div>
  <div class="a" style="left:10px;top:236px;width:8px;height:8px;border-radius:50%;background:#1b6ff2"></div>
  <div class="inp" style="top:228px"></div>
  <div class="a" style="left:156px;top:233px;font-size:12.5px;color:#33363c">5"</div>
  <div class="a" style="left:208px;top:233px;font-size:12.5px;color:#6b6e73">in</div>
</div>
<!-- floating toolbar -->
<div class="a" style="left:614px;top:51px;width:372px;height:38px;background:#fff;border-radius:0 0 6px 6px"></div>
<div class="a" style="left:626px;top:57px;width:40px;height:27px;background:#e1edfd;border-radius:3px"></div>
<div class="a" style="left:653px;top:57px;width:1px;height:27px;background:#d3e4fc"></div>
<svg class="a" style="left:632px;top:62px" width="17" height="16" viewBox="0 0 17 16"><path d="M1.5 15.5V1h13v10.5H4" fill="none" stroke="#1b6ff2" stroke-width="1.9"/><rect x="4.5" y="4" width="7" height="1.8" fill="#1b6ff2"/><rect x="4.5" y="7.3" width="7" height="1.8" fill="#1b6ff2"/><path d="M11 11l5.5 2-2.2.8-.8 2.2z" fill="#1b6ff2"/></svg>
<div class="car" style="left:657px;top:69px;border-top-color:#1b6ff2"></div>
<div class="a" style="left:676px;top:61px;width:1px;height:20px;background:#e8e9eb"></div>
<!-- paint roller -->
<svg class="a" style="left:693px;top:62px" width="17" height="17" viewBox="0 0 17 17"><rect x="1.3" y="1.3" width="13.5" height="4.6" rx="0.5" fill="none" stroke="#6d7075" stroke-width="2.4"/><path d="M1.3 5.5v4h7.3v1.5" fill="none" stroke="#6d7075" stroke-width="2.2"/><rect x="6.7" y="10" width="4" height="6.5" fill="#6d7075"/><path d="M13.7 10.5l1.7 2.8a1.7 1.7 0 1 1-3.4 0z" fill="#6d7075"/></svg>
<!-- palette -->
<svg class="a" style="left:734px;top:62px" width="19" height="17" viewBox="0 0 19 17"><path d="M8.5 0.5a8 8 0 1 0 3.5 15.2V7.5h4A8 8 0 0 0 8.5.5z" fill="#6d7075"/><path d="M5 5.5c1.5-2.2 4-3.2 6.5-2.8-1 .6-1.8 1.5-2 2.8z" fill="#fff"/><path d="M12.5 9h5.5M14 7.5L12.5 9l1.5 1.5M12.5 13.5H18M16.5 12l1.5 1.5-1.5 1.5" fill="none" stroke="#6d7075" stroke-width="1.5"/></svg>
<div class="car" style="left:758px;top:69px;border-top-color:#b5b7ba"></div>
<!-- focus -->
<svg class="a" style="left:785px;top:63px" width="17" height="17" viewBox="0 0 17 17"><path d="M1 4.5V1h3.5M6.5 1h4M12.5 1H16v3.5M16 6.5v4M16 12.5V16h-3.5M10.5 16h-4M4.5 16H1v-3.5M1 10.5v-4" fill="none" stroke="#6d7075" stroke-width="1.7"/><rect x="5.3" y="5.3" width="6.4" height="6.4" fill="none" stroke="#6d7075" stroke-width="1.8"/></svg>
<!-- brush/level -->
<svg class="a" style="left:826px;top:63px" width="18" height="17" viewBox="0 0 18 17"><path d="M10 0.5l3.5 3.5-4.5 4.5L5.5 5z" fill="#6d7075"/><path d="M9.5 6.5l5 5" stroke="#6d7075" stroke-width="3"/><path d="M6.5 7l4 4" stroke="#fff" stroke-width="0.9"/><path d="M1 11.5l2 1.5" stroke="#6d7075" stroke-width="1.4"/><rect x="0" y="15" width="16" height="1.7" fill="#6d7075"/></svg>
<div class="car" style="left:850px;top:69px;border-top-color:#b5b7ba"></div>
<!-- puzzle -->
<svg class="a" style="left:877px;top:62px" width="17" height="17" viewBox="0 0 17 17"><path d="M2 4h3a2.3 2.3 0 1 1 4.5 0H13v3.8a2.3 2.3 0 1 1 0 4.5V16H9v-1a2.3 2.3 0 1 0-4.5 0v1H2v-3.5a2.3 2.3 0 1 0 0-4.5z" fill="#6d7075"/></svg>
<div class="car" style="left:902px;top:69px;border-top-color:#b5b7ba"></div>
<!-- target -->
<svg class="a" style="left:929px;top:62px" width="17" height="17" viewBox="0 0 17 17"><circle cx="8.5" cy="8.5" r="7.5" fill="none" stroke="#6d7075" stroke-width="1.7"/><circle cx="8.5" cy="8.5" r="4.3" fill="none" stroke="#6d7075" stroke-width="1.7"/><rect x="7.8" y="5.5" width="1.5" height="3.8" fill="#6d7075"/></svg>
<div class="car" style="left:954px;top:69px;border-top-color:#b5b7ba"></div>

<!-- bottom toolbars -->
<div class="bx" style="left:380px;width:120px"></div>
<div class="a" style="left:440px;top:815px;width:52px;height:24px;background:#d9e4f1"></div>
<div class="a" style="left:398px;top:819px;font-size:14.5px;-webkit-text-stroke:0.35px currentColor;color:#66696e">2D</div>
<div class="car" style="left:423px;top:827px;border-top-color:#a3a5a9"></div>
<div class="a" style="left:450px;top:819px;font-size:14.5px;-webkit-text-stroke:0.35px currentColor;color:#1b6ff2">3D</div>
<div class="car" style="left:475px;top:827px;border-top-color:#a3a5a9"></div>

<div class="bx" style="left:508px;width:132px"></div>
<svg class="a" style="left:525px;top:820px" width="18" height="14" viewBox="0 0 18 14"><path d="M9 0.5C4.5 0.5 1.5 4 0.5 7c1 3 4 6.5 8.5 6.5S16.5 10 17.5 7C16.5 4 13.5.5 9 .5z" fill="#66696e"/><circle cx="9" cy="7" r="3.5" fill="#f0f0f0"/><circle cx="9" cy="7" r="2" fill="#66696e"/></svg>
<svg class="a" style="left:564px;top:818px" width="19" height="19" viewBox="0 0 19 19"><path d="M1 5.5L5 1h13v12.5L13.5 18H1z" fill="#f0f0f0" stroke="#66696e" stroke-width="1.6" stroke-linejoin="round"/><path d="M1 5.5h12.5V18M13.5 5.5L18 1" fill="none" stroke="#66696e" stroke-width="1.4"/><path d="M6.5 3h7l-1.5 1.3h-7z" fill="#66696e"/><path d="M15.5 5v7l1-1V4z" fill="#66696e"/><rect x="3.8" y="8.3" width="6.9" height="6.9" fill="#66696e"/></svg>
<svg class="a" style="left:604px;top:818px" width="20" height="20" viewBox="0 0 20 20"><circle cx="10" cy="10" r="9.7" fill="#66696e"/><path d="M3.5 13a7 7 0 1 1 13 0" fill="none" stroke="#fff" stroke-width="1.4"/><path d="M9 11.5l5-5" stroke="#fff" stroke-width="1.8"/><circle cx="9.3" cy="11.2" r="1.3" fill="#fff"/></svg>

<div class="bx" style="left:648px;width:166px"></div>
<svg class="a" style="left:661px;top:821px" width="13" height="13" viewBox="0 0 13 13"><circle cx="6.5" cy="6.5" r="6.5" fill="#f0311c"/><path d="M4.3 4.3l4.4 4.4M8.7 4.3L4.3 8.7" stroke="#fff" stroke-width="1.6"/></svg>
<div class="a" style="left:679px;top:819px;font-size:14.5px;-webkit-text-stroke:0.35px currentColor;color:#f0311c">0</div>
<svg class="a" style="left:698px;top:821px" width="13" height="13" viewBox="0 0 13 13"><circle cx="6.5" cy="6.5" r="6.5" fill="#f9a70d"/><rect x="5.7" y="2.8" width="1.7" height="5" fill="#fff"/><circle cx="6.5" cy="9.7" r="1" fill="#fff"/></svg>
<div class="a" style="left:716px;top:819px;font-size:14.5px;-webkit-text-stroke:0.35px currentColor;color:#f9a70d">87</div>
<svg class="a" style="left:744px;top:822px" width="13" height="12" viewBox="0 0 13 12"><path d="M1 11V1h10v5M1 3h10M1 11h6" fill="none" stroke="#66696e" stroke-width="1.6"/><rect x="0.2" y="0.2" width="11.6" height="2.6" fill="#66696e"/><circle cx="9.8" cy="9.8" r="1.6" fill="none" stroke="#66696e" stroke-width="1.2"/></svg>
<div class="a" style="left:762px;top:819px;font-size:14.5px;-webkit-text-stroke:0.35px currentColor;color:#66696e">52</div>
<div class="car" style="left:791px;top:825px;border-top-color:#a3a5a9"></div>

<div class="bx" style="left:926px;width:51px"></div>
<div class="bx" style="left:984px;width:360px"></div>
<svg class="a" style="left:941px;top:818px" width="18" height="18" viewBox="0 0 18 18"><rect x="0.5" y="0.5" width="17" height="7.5" rx="3.75" fill="#66696e"/><circle cx="4.5" cy="4.25" r="2.6" fill="#f0f0f0"/><rect x="0.5" y="10" width="17" height="7.5" rx="3.75" fill="#66696e"/><circle cx="13.5" cy="13.75" r="2.6" fill="#f0f0f0"/></svg>
<svg class="a" style="left:999px;top:820px" width="22" height="17" viewBox="0 0 22 17"><path d="M1 1l10 6-4 1 3 5-2 1-3-5-3 3z" fill="none" stroke="#66696e" stroke-width="1.5"/><path d="M10 3h2M15 3h3v3M18 11v3h-3M10 14h2" fill="none" stroke="#66696e" stroke-width="1.6"/></svg>
<div class="a" style="left:1214px;top:830px;width:70px;height:2px;background:#e3e4e6"></div>
<div class="a" style="left:1209px;top:826px;width:10px;height:10px;border-radius:50%;background:#1b6ff2;border:2px solid #fff"></div>
<svg class="a" style="left:1301px;top:823px" width="18" height="18" viewBox="0 0 18 18"><circle cx="7.5" cy="7.5" r="6.5" fill="none" stroke="#66696e" stroke-width="1.6"/><path d="M7.5 4.3v6.4M4.3 7.5h6.4" stroke="#66696e" stroke-width="1.6"/><path d="M12.2 12.2L17 17" stroke="#66696e" stroke-width="1.8"/></svg>

<!-- clipboard widget -->
<div class="a" style="left:1296px;top:765px;width:48px;height:36px;background:#fff;border-radius:4px"></div>
<div class="a" style="left:1296px;top:765px;width:12px;height:36px;background:#f7f7f8;border-radius:4px 0 0 4px"></div>
<svg class="a" style="left:1300px;top:775px" width="4" height="16" viewBox="0 0 4 16"><g fill="#b9bbbe"><rect x="0" y="0" width="1.2" height="1.2"/><rect x="2.5" y="0" width="1.2" height="1.2"/><rect x="0" y="2.5" width="1.2" height="1.2"/><rect x="2.5" y="2.5" width="1.2" height="1.2"/><rect x="0" y="5" width="1.2" height="1.2"/><rect x="2.5" y="5" width="1.2" height="1.2"/><rect x="0" y="7.5" width="1.2" height="1.2"/><rect x="2.5" y="7.5" width="1.2" height="1.2"/><rect x="0" y="10" width="1.2" height="1.2"/><rect x="2.5" y="10" width="1.2" height="1.2"/><rect x="0" y="12.5" width="1.2" height="1.2"/><rect x="2.5" y="12.5" width="1.2" height="1.2"/></g></svg>
<svg class="a" style="left:1317px;top:772px" width="17" height="21" viewBox="0 0 17 21"><rect x="0" y="3" width="17" height="18" rx="1" fill="#66696e"/><rect x="4.5" y="0.5" width="8" height="4" rx="0.5" fill="#fff" stroke="#66696e" stroke-width="1.2"/><path d="M17 11h-6a2 2 0 0 0 0 4h6" fill="#fff"/><circle cx="12" cy="13" r="1" fill="#66696e"/></svg>

<!-- context menu -->
<div class="a" style="left:864px;top:693px;width:172px;height:120px;background:#fff;border-radius:4px;overflow:hidden">
  <div class="a" style="left:0;top:80px;width:172px;height:40px;background:#f5f5f5"></div>
  <div class="mi" style="top:13px">Lateral Snap</div>
  <div class="mi" style="top:53px">Adapt with Limit</div>
  <div class="mi" style="top:93px">Sizing Limit(CTRL + M )</div>
  <svg class="a" style="left:157px;top:15px" width="6" height="11" viewBox="0 0 6 11"><path d="M0.7 0.7l4.5 4.8-4.5 4.8" fill="none" stroke="#c9cbce" stroke-width="1.1"/></svg>
  <svg class="a" style="left:157px;top:55px" width="6" height="11" viewBox="0 0 6 11"><path d="M0.7 0.7l4.5 4.8-4.5 4.8" fill="none" stroke="#c9cbce" stroke-width="1.1"/></svg>
  <svg class="a" style="left:157px;top:95px" width="6" height="11" viewBox="0 0 6 11"><path d="M0.7 0.7l4.5 4.8-4.5 4.8" fill="none" stroke="#c9cbce" stroke-width="1.1"/></svg>
</div>
<div class="a" style="left:864px;top:771px;width:162px;height:38px;border:3px solid #f5141b;border-radius:3px"></div>
<div class="a" style="left:926px;top:810px;width:52px;height:37px;border:3px solid #f5141b;border-radius:3px"></div>

<!-- submenu -->
<div class="a" style="left:1035px;top:731px;width:155px;height:119px;background:#fff;border-radius:4px;overflow:hidden">
  <div class="a" style="left:0;top:0;width:155px;height:40px;background:#f6f6f6"></div>
  <div class="ck" style="top:13px"></div><div class="mi" style="left:30px;top:14px;font-size:13px;color:#55585e">Closet</div>
  <div class="ck" style="top:53px"></div><div class="mi" style="left:30px;top:54px;font-size:13px;color:#55585e">Doors &amp; Windows</div>
  <div class="ck" style="top:93px"></div><div class="mi" style="left:30px;top:94px;font-size:13px;color:#55585e">Kitchen &amp; Bath</div>
</div>
<div class="a" style="left:1029px;top:726px;width:167px;height:127px;border:3px solid #f5141b;border-radius:4px"></div>

<!-- chat bubble -->
<div class="a" style="left:20px;top:793px;width:48px;height:48px;border-radius:50%;background:#2290ea;box-shadow:0 2px 6px rgba(0,0,0,0.12)"></div>
<svg class="a" style="left:31px;top:806px" width="26" height="24" viewBox="0 0 26 24"><defs><linearGradient id="cg" x1="0" y1="0" x2="1" y2="1"><stop offset="0.45" stop-color="#fff"/><stop offset="1" stop-color="#a9d6fb"/></linearGradient></defs><path d="M2 0.5h21a2 2 0 0 1 2 2V15a2 2 0 0 1-2 2H9L3.8 23V17H2a2 2 0 0 1-2-2V2.5a2 2 0 0 1 2-2z" fill="url(#cg)"/><circle cx="7" cy="9" r="1.4" fill="#1b6ff2"/><circle cx="13" cy="9" r="1.4" fill="#1b6ff2"/><circle cx="19" cy="9" r="1.4" fill="#1b6ff2"/></svg>
</div></body></html>
